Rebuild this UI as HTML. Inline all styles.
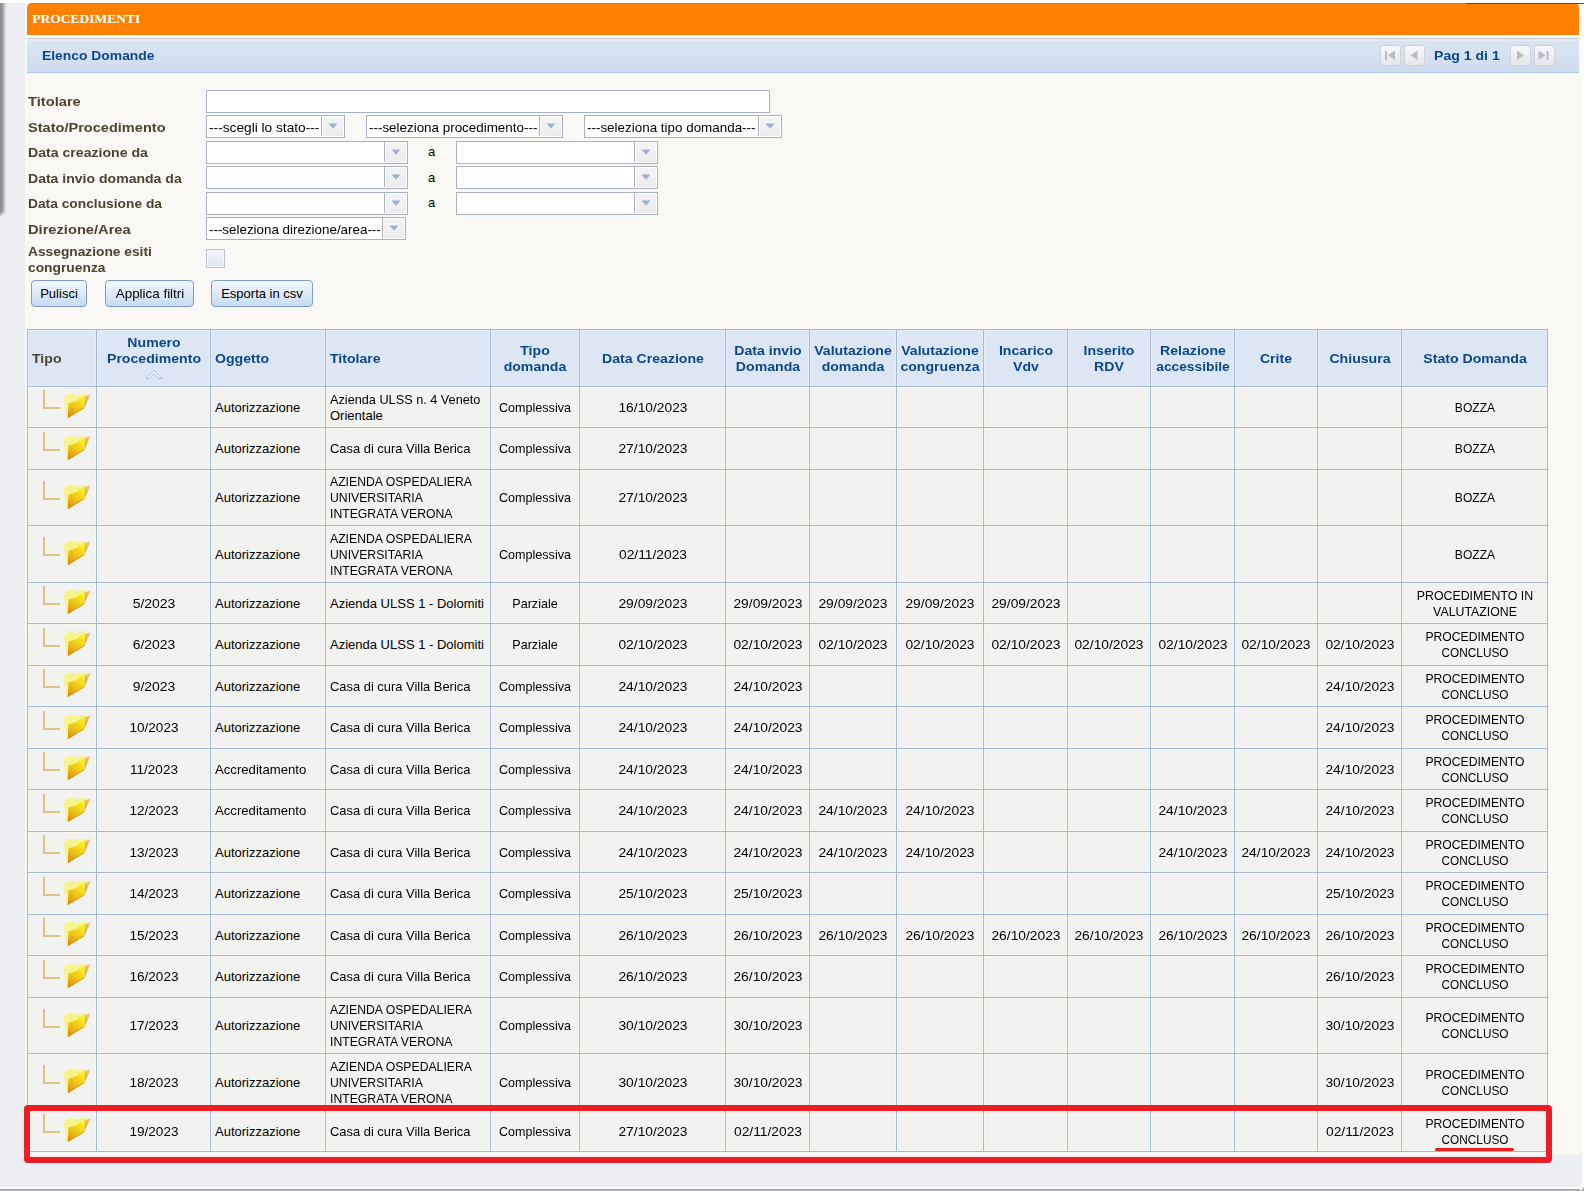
<!DOCTYPE html><html><head><meta charset="utf-8"><style>
html,body{margin:0;padding:0}
body{width:1584px;height:1191px;overflow:hidden;position:relative;background:#eceef2;font-family:"Liberation Sans",sans-serif;font-size:13px;color:#000}
div{position:absolute;box-sizing:border-box}
.t{white-space:nowrap;line-height:16px}
.c{width:600px;text-align:center;transform-origin:50% 0}
.lb{font-weight:700;color:#4b4637}
.cell{background:#f2f2f0;box-shadow:inset 0 0 0 1px #f8f7f3}
.hcell{background:#dde6f5;box-shadow:inset 0 0 0 1px #e6ecf8}
.inp{background:#fff;border:1px solid #a9b3c4}
.btn{border:1px solid #7e9cc4;border-radius:4px;background:linear-gradient(#f3f8fd,#c9def5)}
.pg{width:20px;height:20px;border:1px solid #cfd2d8;border-radius:3px;background:linear-gradient(#f7f8fa,#e6e8ec)}
</style></head><body>
<div style="left:0px;top:0px;width:1584px;height:3px;background:#fff"></div>
<div style="left:1582px;top:0px;width:2px;height:1191px;background:#fff"></div>
<div style="left:0px;top:1187px;width:1584px;height:2px;background:#fff"></div>
<div style="left:0px;top:1189px;width:1584px;height:2px;background:linear-gradient(#a4a4a4,#b8b8b8)"></div>
<div style="left:1574px;top:1179px;width:10px;height:10px;background:#fff"></div>
<div style="left:1570px;top:1175px;width:12px;height:12px;background:#eceef2;border-radius:0 0 5px 0"></div>
<div style="left:1580px;top:1187px;width:4px;height:4px;background:radial-gradient(circle at 0 0,#fff 0,#fff 45%,#a8a8a8 70%)"></div>
<div style="left:-8px;top:0px;width:12px;height:215px;background:#8c8f94;border-radius:0 0 5px 0;filter:blur(1.6px)"></div>
<div style="left:0px;top:0px;width:1584px;height:3px;background:#fff"></div>
<div style="left:25px;top:3px;width:1557px;height:1152px;background:#f9f8f4;border-radius:0 0 5px 0"></div>
<div style="left:25px;top:3px;width:2px;height:36px;background:#fdfdfb"></div>
<div style="left:27px;top:3px;width:1552px;height:32px;background:#ff8002;border-top:1px solid #e27302;border-radius:5px 5px 0 0"></div>
<div style="left:1466px;top:3px;width:118px;height:1px;background:#f00"></div>
<div style="left:27px;top:35px;width:1552px;height:3px;background:#fdfcf9"></div>
<div style="left:27px;top:38px;width:1552px;height:1px;background:#c8c8c6"></div>
<div style="left:27px;top:39px;width:1552px;height:2px;background:linear-gradient(#e9eef5,#e2eaf5)"></div>
<div style="left:27px;top:41px;width:1552px;height:31px;background:linear-gradient(#dae5f3,#cfdcee)"></div>
<div style="left:27px;top:72px;width:1552px;height:1px;background:#a9c5ea"></div>
<div class="t" style="left:32.20px;top:11.00px;font-size:13.5px;font-weight:700;color:#fff;font-family:'Liberation Serif',serif;transform-origin:0 0">PROCEDIMENTI</div>
<div class="t" style="left:42.20px;top:48.00px;font-weight:700;color:#0b4788;transform:scaleX(1.0670);transform-origin:0 0">Elenco Domande</div>
<div class="t" style="left:1433.70px;top:48.00px;font-weight:700;color:#0b4788;transform:scaleX(1.0830);transform-origin:0 0">Pag 1 di 1</div>
<div style="left:1380px;top:45px;width:21px;height:21px;border:1px solid #cfd2d8;border-radius:3px;background:linear-gradient(#f7f8fa,#e5e7eb)"></div>
<div style="left:1404px;top:45px;width:21px;height:21px;border:1px solid #cfd2d8;border-radius:3px;background:linear-gradient(#f7f8fa,#e5e7eb)"></div>
<div style="left:1510px;top:45px;width:21px;height:21px;border:1px solid #cfd2d8;border-radius:3px;background:linear-gradient(#f7f8fa,#e5e7eb)"></div>
<div style="left:1534px;top:45px;width:21px;height:21px;border:1px solid #cfd2d8;border-radius:3px;background:linear-gradient(#f7f8fa,#e5e7eb)"></div>
<svg style="position:absolute;left:1380px;top:45px" width="20" height="20"><rect x="5" y="6" width="2" height="9" fill="#b9bdc3"/><path d="M15,5.5 L15,15 L8,10.3 Z" fill="#b9bdc3"/></svg>
<svg style="position:absolute;left:1404px;top:45px" width="20" height="20"><path d="M13.5,5.5 L13.5,15 L6.5,10.3 Z" fill="#b9bdc3"/></svg>
<svg style="position:absolute;left:1510px;top:45px" width="20" height="20"><path d="M7,5.5 L7,15 L14,10.3 Z" fill="#b9bdc3"/></svg>
<svg style="position:absolute;left:1534px;top:45px" width="20" height="20"><path d="M4.5,5.5 L4.5,15 L11.5,10.3 Z" fill="#b9bdc3"/><rect x="12.5" y="6" width="2" height="9" fill="#b9bdc3"/></svg>
<div class="t" style="left:27.60px;top:94.00px;font-weight:700;color:#4a4431;transform:scaleX(1.1300);transform-origin:0 0">Titolare</div>
<div class="t" style="left:27.60px;top:120.00px;font-weight:700;color:#4a4431;transform:scaleX(1.1200);transform-origin:0 0">Stato/Procedimento</div>
<div class="t" style="left:27.60px;top:145.00px;font-weight:700;color:#4a4431;transform:scaleX(1.0850);transform-origin:0 0">Data creazione da</div>
<div class="t" style="left:27.60px;top:171.00px;font-weight:700;color:#4a4431;transform:scaleX(1.0800);transform-origin:0 0">Data invio domanda da</div>
<div class="t" style="left:27.60px;top:196.00px;font-weight:700;color:#4a4431;transform:scaleX(1.0600);transform-origin:0 0">Data conclusione da</div>
<div class="t" style="left:27.60px;top:222.00px;font-weight:700;color:#4a4431;transform:scaleX(1.1280);transform-origin:0 0">Direzione/Area</div>
<div class="t" style="left:27.60px;top:244.00px;font-weight:700;color:#4a4431;transform:scaleX(1.0580);transform-origin:0 0">Assegnazione esiti</div>
<div class="t" style="left:27.60px;top:260.00px;font-weight:700;color:#4a4431;transform:scaleX(1.0620);transform-origin:0 0">congruenza</div>
<div style="left:206px;top:90px;width:564px;height:23px;background:#fff;border:1px solid #a9b1c0"></div>
<div style="left:206px;top:115px;width:139px;height:23px;background:#fff;border:1px solid #a9b1c0"></div>
<div style="left:321px;top:115px;width:1px;height:21px;background:#a9b1c0"></div>
<div style="left:323px;top:117px;width:20px;height:19px;background:linear-gradient(#f4f4f5,#ececee)"></div>
<svg style="position:absolute;left:328.0px;top:123px" width="10" height="6"><path d="M0.5,0.5 L9.5,0.5 L5,5.8 Z" fill="#9db0d3"/></svg>
<div class="t" style="left:208.60px;top:120.00px;transform:scaleX(1.0540);transform-origin:0 0">---scegli lo stato---</div>
<div style="left:366px;top:115px;width:197px;height:23px;background:#fff;border:1px solid #a9b1c0"></div>
<div style="left:539px;top:115px;width:1px;height:21px;background:#a9b1c0"></div>
<div style="left:541px;top:117px;width:20px;height:19px;background:linear-gradient(#f4f4f5,#ececee)"></div>
<svg style="position:absolute;left:546.0px;top:123px" width="10" height="6"><path d="M0.5,0.5 L9.5,0.5 L5,5.8 Z" fill="#9db0d3"/></svg>
<div class="t" style="left:368.60px;top:120.00px;transform:scaleX(1.0310);transform-origin:0 0">---seleziona procedimento---</div>
<div style="left:584px;top:115px;width:198px;height:23px;background:#fff;border:1px solid #a9b1c0"></div>
<div style="left:758px;top:115px;width:1px;height:21px;background:#a9b1c0"></div>
<div style="left:760px;top:117px;width:20px;height:19px;background:linear-gradient(#f4f4f5,#ececee)"></div>
<svg style="position:absolute;left:765.0px;top:123px" width="10" height="6"><path d="M0.5,0.5 L9.5,0.5 L5,5.8 Z" fill="#9db0d3"/></svg>
<div class="t" style="left:586.60px;top:120.00px;transform:scaleX(1.0320);transform-origin:0 0">---seleziona tipo domanda---</div>
<div style="left:206px;top:141px;width:202px;height:23px;background:#fff;border:1px solid #a9b1c0"></div>
<div style="left:384px;top:141px;width:1px;height:21px;background:#a9b1c0"></div>
<div style="left:386px;top:143px;width:20px;height:19px;background:linear-gradient(#f4f4f5,#ececee)"></div>
<svg style="position:absolute;left:391.0px;top:149px" width="10" height="6"><path d="M0.5,0.5 L9.5,0.5 L5,5.8 Z" fill="#9db0d3"/></svg>
<div style="left:456px;top:141px;width:202px;height:23px;background:#fff;border:1px solid #a9b1c0"></div>
<div style="left:634px;top:141px;width:1px;height:21px;background:#a9b1c0"></div>
<div style="left:636px;top:143px;width:20px;height:19px;background:linear-gradient(#f4f4f5,#ececee)"></div>
<svg style="position:absolute;left:641.0px;top:149px" width="10" height="6"><path d="M0.5,0.5 L9.5,0.5 L5,5.8 Z" fill="#9db0d3"/></svg>
<div style="left:206px;top:166px;width:202px;height:23px;background:#fff;border:1px solid #a9b1c0"></div>
<div style="left:384px;top:166px;width:1px;height:21px;background:#a9b1c0"></div>
<div style="left:386px;top:168px;width:20px;height:19px;background:linear-gradient(#f4f4f5,#ececee)"></div>
<svg style="position:absolute;left:391.0px;top:174px" width="10" height="6"><path d="M0.5,0.5 L9.5,0.5 L5,5.8 Z" fill="#9db0d3"/></svg>
<div style="left:456px;top:166px;width:202px;height:23px;background:#fff;border:1px solid #a9b1c0"></div>
<div style="left:634px;top:166px;width:1px;height:21px;background:#a9b1c0"></div>
<div style="left:636px;top:168px;width:20px;height:19px;background:linear-gradient(#f4f4f5,#ececee)"></div>
<svg style="position:absolute;left:641.0px;top:174px" width="10" height="6"><path d="M0.5,0.5 L9.5,0.5 L5,5.8 Z" fill="#9db0d3"/></svg>
<div style="left:206px;top:192px;width:202px;height:23px;background:#fff;border:1px solid #a9b1c0"></div>
<div style="left:384px;top:192px;width:1px;height:21px;background:#a9b1c0"></div>
<div style="left:386px;top:194px;width:20px;height:19px;background:linear-gradient(#f4f4f5,#ececee)"></div>
<svg style="position:absolute;left:391.0px;top:200px" width="10" height="6"><path d="M0.5,0.5 L9.5,0.5 L5,5.8 Z" fill="#9db0d3"/></svg>
<div style="left:456px;top:192px;width:202px;height:23px;background:#fff;border:1px solid #a9b1c0"></div>
<div style="left:634px;top:192px;width:1px;height:21px;background:#a9b1c0"></div>
<div style="left:636px;top:194px;width:20px;height:19px;background:linear-gradient(#f4f4f5,#ececee)"></div>
<svg style="position:absolute;left:641.0px;top:200px" width="10" height="6"><path d="M0.5,0.5 L9.5,0.5 L5,5.8 Z" fill="#9db0d3"/></svg>
<div class="t c" style="left:131.70px;top:144.00px;">a</div>
<div class="t c" style="left:131.70px;top:170.00px;">a</div>
<div class="t c" style="left:131.70px;top:195.00px;">a</div>
<div style="left:206px;top:217px;width:200px;height:23px;background:#fff;border:1px solid #a9b1c0"></div>
<div style="left:382px;top:217px;width:1px;height:21px;background:#a9b1c0"></div>
<div style="left:384px;top:219px;width:20px;height:19px;background:linear-gradient(#f4f4f5,#ececee)"></div>
<svg style="position:absolute;left:389.0px;top:225px" width="10" height="6"><path d="M0.5,0.5 L9.5,0.5 L5,5.8 Z" fill="#9db0d3"/></svg>
<div class="t" style="left:208.60px;top:222.00px;transform:scaleX(1.0290);transform-origin:0 0">---seleziona direzione/area---</div>
<div style="left:206px;top:249px;width:19px;height:19px;border:1px solid #b9c3d1;box-shadow:inset 0 0 0 1px #f4f6f9;background:linear-gradient(#f3f5f8,#dfe6ee)"></div>
<div style="left:31px;top:280px;width:56px;height:27px;border:1px solid #7e9cc4;border-radius:4px;background:linear-gradient(#f3f8fd,#c6dbf3)"></div>
<div class="t c" style="left:-241.00px;top:286.00px;">Pulisci</div>
<div style="left:105px;top:280px;width:89px;height:27px;border:1px solid #7e9cc4;border-radius:4px;background:linear-gradient(#f3f8fd,#c6dbf3)"></div>
<div class="t c" style="left:-150.50px;top:286.00px;transform:scaleX(1.0300);">Applica filtri</div>
<div style="left:211px;top:280px;width:102px;height:27px;border:1px solid #7e9cc4;border-radius:4px;background:linear-gradient(#f3f8fd,#c6dbf3)"></div>
<div class="t c" style="left:-38.00px;top:286.00px;">Esporta in csv</div>
<div style="left:27px;top:329px;width:1521px;height:823px;background:#a3b8d2"></div>
<div style="left:28px;top:330px;width:68px;height:56px;background:#dde6f5;box-shadow:inset 0 0 0 1px #e6ecf8"></div>
<div class="t" style="left:31.60px;top:351.00px;font-weight:700;color:#4a4431;transform:scaleX(1.0850);transform-origin:0 0">Tipo</div>
<div style="left:97px;top:330px;width:113px;height:56px;background:#dde6f5;box-shadow:inset 0 0 0 1px #e6ecf8"></div>
<div class="t c" style="left:-146.50px;top:335.00px;font-weight:700;color:#0b4788;transform:scaleX(1.0850);">Numero</div>
<div class="t c" style="left:-146.50px;top:351.00px;font-weight:700;color:#0b4788;transform:scaleX(1.0850);">Procedimento</div>
<svg style="position:absolute;left:144.5px;top:369.0px" width="18" height="11"><path d="M1,9.5 L9,1.5 L17,9.5 L13.8,9.5 L9,4.8 L4.2,9.5 Z" fill="#f4f7fb" stroke="#a3bbd6" stroke-width="1"/></svg>
<div style="left:211px;top:330px;width:114px;height:56px;background:#dde6f5;box-shadow:inset 0 0 0 1px #e6ecf8"></div>
<div class="t" style="left:214.60px;top:351.00px;font-weight:700;color:#0b4788;transform:scaleX(1.0850);transform-origin:0 0">Oggetto</div>
<div style="left:326px;top:330px;width:164px;height:56px;background:#dde6f5;box-shadow:inset 0 0 0 1px #e6ecf8"></div>
<div class="t" style="left:329.60px;top:351.00px;font-weight:700;color:#0b4788;transform:scaleX(1.0850);transform-origin:0 0">Titolare</div>
<div style="left:491px;top:330px;width:88px;height:56px;background:#dde6f5;box-shadow:inset 0 0 0 1px #e6ecf8"></div>
<div class="t c" style="left:235.00px;top:343.00px;font-weight:700;color:#0b4788;transform:scaleX(1.0850);">Tipo</div>
<div class="t c" style="left:235.00px;top:359.00px;font-weight:700;color:#0b4788;transform:scaleX(1.0850);">domanda</div>
<div style="left:580px;top:330px;width:145px;height:56px;background:#dde6f5;box-shadow:inset 0 0 0 1px #e6ecf8"></div>
<div class="t c" style="left:352.50px;top:351.00px;font-weight:700;color:#0b4788;transform:scaleX(1.0850);">Data Creazione</div>
<div style="left:726px;top:330px;width:83px;height:56px;background:#dde6f5;box-shadow:inset 0 0 0 1px #e6ecf8"></div>
<div class="t c" style="left:467.50px;top:343.00px;font-weight:700;color:#0b4788;transform:scaleX(1.0850);">Data invio</div>
<div class="t c" style="left:467.50px;top:359.00px;font-weight:700;color:#0b4788;transform:scaleX(1.0850);">Domanda</div>
<div style="left:810px;top:330px;width:86px;height:56px;background:#dde6f5;box-shadow:inset 0 0 0 1px #e6ecf8"></div>
<div class="t c" style="left:553.00px;top:343.00px;font-weight:700;color:#0b4788;transform:scaleX(1.0850);">Valutazione</div>
<div class="t c" style="left:553.00px;top:359.00px;font-weight:700;color:#0b4788;transform:scaleX(1.0850);">domanda</div>
<div style="left:897px;top:330px;width:86px;height:56px;background:#dde6f5;box-shadow:inset 0 0 0 1px #e6ecf8"></div>
<div class="t c" style="left:640.00px;top:343.00px;font-weight:700;color:#0b4788;transform:scaleX(1.0850);">Valutazione</div>
<div class="t c" style="left:640.00px;top:359.00px;font-weight:700;color:#0b4788;transform:scaleX(1.0850);">congruenza</div>
<div style="left:984px;top:330px;width:83px;height:56px;background:#dde6f5;box-shadow:inset 0 0 0 1px #e6ecf8"></div>
<div class="t c" style="left:725.50px;top:343.00px;font-weight:700;color:#0b4788;transform:scaleX(1.0850);">Incarico</div>
<div class="t c" style="left:725.50px;top:359.00px;font-weight:700;color:#0b4788;transform:scaleX(1.0850);">Vdv</div>
<div style="left:1068px;top:330px;width:82px;height:56px;background:#dde6f5;box-shadow:inset 0 0 0 1px #e6ecf8"></div>
<div class="t c" style="left:809.00px;top:343.00px;font-weight:700;color:#0b4788;transform:scaleX(1.0850);">Inserito</div>
<div class="t c" style="left:809.00px;top:359.00px;font-weight:700;color:#0b4788;transform:scaleX(1.0850);">RDV</div>
<div style="left:1151px;top:330px;width:83px;height:56px;background:#dde6f5;box-shadow:inset 0 0 0 1px #e6ecf8"></div>
<div class="t c" style="left:892.50px;top:343.00px;font-weight:700;color:#0b4788;transform:scaleX(1.0850);">Relazione</div>
<div class="t c" style="left:892.50px;top:359.00px;font-weight:700;color:#0b4788;transform:scaleX(1.0600);">accessibile</div>
<div style="left:1235px;top:330px;width:82px;height:56px;background:#dde6f5;box-shadow:inset 0 0 0 1px #e6ecf8"></div>
<div class="t c" style="left:976.00px;top:351.00px;font-weight:700;color:#0b4788;transform:scaleX(1.0850);">Crite</div>
<div style="left:1318px;top:330px;width:83px;height:56px;background:#dde6f5;box-shadow:inset 0 0 0 1px #e6ecf8"></div>
<div class="t c" style="left:1059.50px;top:351.00px;font-weight:700;color:#0b4788;transform:scaleX(1.0850);">Chiusura</div>
<div style="left:1402px;top:330px;width:145px;height:56px;background:#dde6f5;box-shadow:inset 0 0 0 1px #e6ecf8"></div>
<div class="t c" style="left:1174.50px;top:351.00px;font-weight:700;color:#0b4788;transform:scaleX(1.0850);">Stato Domanda</div>
<div style="left:28px;top:387px;width:68px;height:40px;background:#f2f2f0;box-shadow:inset 0 0 0 1px #f8f7f3"></div>
<div style="left:97px;top:387px;width:113px;height:40px;background:#f2f2f0;box-shadow:inset 0 0 0 1px #f8f7f3"></div>
<div style="left:211px;top:387px;width:114px;height:40px;background:#f2f2f0;box-shadow:inset 0 0 0 1px #f8f7f3"></div>
<div style="left:326px;top:387px;width:164px;height:40px;background:#f2f2f0;box-shadow:inset 0 0 0 1px #f8f7f3"></div>
<div style="left:491px;top:387px;width:88px;height:40px;background:#f2f2f0;box-shadow:inset 0 0 0 1px #f8f7f3"></div>
<div style="left:580px;top:387px;width:145px;height:40px;background:#f2f2f0;box-shadow:inset 0 0 0 1px #f8f7f3"></div>
<div style="left:726px;top:387px;width:83px;height:40px;background:#f2f2f0;box-shadow:inset 0 0 0 1px #f8f7f3"></div>
<div style="left:810px;top:387px;width:86px;height:40px;background:#f2f2f0;box-shadow:inset 0 0 0 1px #f8f7f3"></div>
<div style="left:897px;top:387px;width:86px;height:40px;background:#f2f2f0;box-shadow:inset 0 0 0 1px #f8f7f3"></div>
<div style="left:984px;top:387px;width:83px;height:40px;background:#f2f2f0;box-shadow:inset 0 0 0 1px #f8f7f3"></div>
<div style="left:1068px;top:387px;width:82px;height:40px;background:#f2f2f0;box-shadow:inset 0 0 0 1px #f8f7f3"></div>
<div style="left:1151px;top:387px;width:83px;height:40px;background:#f2f2f0;box-shadow:inset 0 0 0 1px #f8f7f3"></div>
<div style="left:1235px;top:387px;width:82px;height:40px;background:#f2f2f0;box-shadow:inset 0 0 0 1px #f8f7f3"></div>
<div style="left:1318px;top:387px;width:83px;height:40px;background:#f2f2f0;box-shadow:inset 0 0 0 1px #f8f7f3"></div>
<div style="left:1402px;top:387px;width:145px;height:40px;background:#f2f2f0;box-shadow:inset 0 0 0 1px #f8f7f3"></div>
<div style="left:43px;top:390.0px;width:2px;height:19px;background:#dcc188"></div>
<div style="left:43px;top:407.0px;width:17px;height:2px;background:#dcc188"></div>
<svg style="position:absolute;left:63px;top:393.0px" width="28" height="26" viewBox="0 0 28 26">
<defs><linearGradient id="fg1" x1="0.75" y1="0" x2="0.25" y2="1"><stop offset="0" stop-color="#faf41e"/><stop offset="0.5" stop-color="#efc818"/><stop offset="1" stop-color="#d98f0f"/></linearGradient>
<linearGradient id="ff1" x1="0" y1="0" x2="0" y2="1"><stop offset="0" stop-color="#efc86a"/><stop offset="1" stop-color="#d49c48"/></linearGradient></defs>
<path d="M0.6,7 C0.9,4.4 2.4,1.8 4.3,1.4 L9.2,0.5 L11.7,2.2 L21.3,0.4 L22.5,2.2 L21.6,14.6 L4.8,24.9 L4.0,24.7 Z" fill="#f7f48e"/>
<path d="M21.5,3 L27.4,1.6 L21.4,14.8 Z" fill="url(#ff1)"/>
<path d="M5.4,10.5 L14.2,7.8 L15.8,5.4 L21.6,3.3 L21.4,14.8 L4.8,25 Z" fill="url(#fg1)"/>
<path d="M4.8,24.9 L21.4,14.7" stroke="#c8901c" stroke-width="0.8" fill="none"/>
</svg>
<div class="t" style="left:215.00px;top:400.00px;transform-origin:0 0">Autorizzazione</div>
<div class="t" style="left:330.00px;top:392.00px;transform:scaleX(0.9770);transform-origin:0 0">Azienda ULSS n. 4 Veneto</div>
<div class="t" style="left:330.00px;top:408.00px;transform-origin:0 0">Orientale</div>
<div class="t c" style="left:235.00px;top:400.00px;transform:scaleX(0.9660);">Complessiva</div>
<div class="t c" style="left:352.50px;top:400.00px;transform:scaleX(1.0620);">16/10/2023</div>
<div class="t c" style="left:1174.50px;top:400.00px;transform:scaleX(0.9300);">BOZZA</div>
<div style="left:28px;top:428px;width:68px;height:41px;background:#f2f2f0;box-shadow:inset 0 0 0 1px #f8f7f3"></div>
<div style="left:97px;top:428px;width:113px;height:41px;background:#f2f2f0;box-shadow:inset 0 0 0 1px #f8f7f3"></div>
<div style="left:211px;top:428px;width:114px;height:41px;background:#f2f2f0;box-shadow:inset 0 0 0 1px #f8f7f3"></div>
<div style="left:326px;top:428px;width:164px;height:41px;background:#f2f2f0;box-shadow:inset 0 0 0 1px #f8f7f3"></div>
<div style="left:491px;top:428px;width:88px;height:41px;background:#f2f2f0;box-shadow:inset 0 0 0 1px #f8f7f3"></div>
<div style="left:580px;top:428px;width:145px;height:41px;background:#f2f2f0;box-shadow:inset 0 0 0 1px #f8f7f3"></div>
<div style="left:726px;top:428px;width:83px;height:41px;background:#f2f2f0;box-shadow:inset 0 0 0 1px #f8f7f3"></div>
<div style="left:810px;top:428px;width:86px;height:41px;background:#f2f2f0;box-shadow:inset 0 0 0 1px #f8f7f3"></div>
<div style="left:897px;top:428px;width:86px;height:41px;background:#f2f2f0;box-shadow:inset 0 0 0 1px #f8f7f3"></div>
<div style="left:984px;top:428px;width:83px;height:41px;background:#f2f2f0;box-shadow:inset 0 0 0 1px #f8f7f3"></div>
<div style="left:1068px;top:428px;width:82px;height:41px;background:#f2f2f0;box-shadow:inset 0 0 0 1px #f8f7f3"></div>
<div style="left:1151px;top:428px;width:83px;height:41px;background:#f2f2f0;box-shadow:inset 0 0 0 1px #f8f7f3"></div>
<div style="left:1235px;top:428px;width:82px;height:41px;background:#f2f2f0;box-shadow:inset 0 0 0 1px #f8f7f3"></div>
<div style="left:1318px;top:428px;width:83px;height:41px;background:#f2f2f0;box-shadow:inset 0 0 0 1px #f8f7f3"></div>
<div style="left:1402px;top:428px;width:145px;height:41px;background:#f2f2f0;box-shadow:inset 0 0 0 1px #f8f7f3"></div>
<div style="left:43px;top:431.5px;width:2px;height:19px;background:#dcc188"></div>
<div style="left:43px;top:448.5px;width:17px;height:2px;background:#dcc188"></div>
<svg style="position:absolute;left:63px;top:434.5px" width="28" height="26" viewBox="0 0 28 26">
<defs><linearGradient id="fg2" x1="0.75" y1="0" x2="0.25" y2="1"><stop offset="0" stop-color="#faf41e"/><stop offset="0.5" stop-color="#efc818"/><stop offset="1" stop-color="#d98f0f"/></linearGradient>
<linearGradient id="ff2" x1="0" y1="0" x2="0" y2="1"><stop offset="0" stop-color="#efc86a"/><stop offset="1" stop-color="#d49c48"/></linearGradient></defs>
<path d="M0.6,7 C0.9,4.4 2.4,1.8 4.3,1.4 L9.2,0.5 L11.7,2.2 L21.3,0.4 L22.5,2.2 L21.6,14.6 L4.8,24.9 L4.0,24.7 Z" fill="#f7f48e"/>
<path d="M21.5,3 L27.4,1.6 L21.4,14.8 Z" fill="url(#ff2)"/>
<path d="M5.4,10.5 L14.2,7.8 L15.8,5.4 L21.6,3.3 L21.4,14.8 L4.8,25 Z" fill="url(#fg2)"/>
<path d="M4.8,24.9 L21.4,14.7" stroke="#c8901c" stroke-width="0.8" fill="none"/>
</svg>
<div class="t" style="left:215.00px;top:441.00px;transform-origin:0 0">Autorizzazione</div>
<div class="t" style="left:330.00px;top:441.00px;transform:scaleX(0.9930);transform-origin:0 0">Casa di cura Villa Berica</div>
<div class="t c" style="left:235.00px;top:441.00px;transform:scaleX(0.9660);">Complessiva</div>
<div class="t c" style="left:352.50px;top:441.00px;transform:scaleX(1.0620);">27/10/2023</div>
<div class="t c" style="left:1174.50px;top:441.00px;transform:scaleX(0.9300);">BOZZA</div>
<div style="left:28px;top:470px;width:68px;height:55px;background:#f2f2f0;box-shadow:inset 0 0 0 1px #f8f7f3"></div>
<div style="left:97px;top:470px;width:113px;height:55px;background:#f2f2f0;box-shadow:inset 0 0 0 1px #f8f7f3"></div>
<div style="left:211px;top:470px;width:114px;height:55px;background:#f2f2f0;box-shadow:inset 0 0 0 1px #f8f7f3"></div>
<div style="left:326px;top:470px;width:164px;height:55px;background:#f2f2f0;box-shadow:inset 0 0 0 1px #f8f7f3"></div>
<div style="left:491px;top:470px;width:88px;height:55px;background:#f2f2f0;box-shadow:inset 0 0 0 1px #f8f7f3"></div>
<div style="left:580px;top:470px;width:145px;height:55px;background:#f2f2f0;box-shadow:inset 0 0 0 1px #f8f7f3"></div>
<div style="left:726px;top:470px;width:83px;height:55px;background:#f2f2f0;box-shadow:inset 0 0 0 1px #f8f7f3"></div>
<div style="left:810px;top:470px;width:86px;height:55px;background:#f2f2f0;box-shadow:inset 0 0 0 1px #f8f7f3"></div>
<div style="left:897px;top:470px;width:86px;height:55px;background:#f2f2f0;box-shadow:inset 0 0 0 1px #f8f7f3"></div>
<div style="left:984px;top:470px;width:83px;height:55px;background:#f2f2f0;box-shadow:inset 0 0 0 1px #f8f7f3"></div>
<div style="left:1068px;top:470px;width:82px;height:55px;background:#f2f2f0;box-shadow:inset 0 0 0 1px #f8f7f3"></div>
<div style="left:1151px;top:470px;width:83px;height:55px;background:#f2f2f0;box-shadow:inset 0 0 0 1px #f8f7f3"></div>
<div style="left:1235px;top:470px;width:82px;height:55px;background:#f2f2f0;box-shadow:inset 0 0 0 1px #f8f7f3"></div>
<div style="left:1318px;top:470px;width:83px;height:55px;background:#f2f2f0;box-shadow:inset 0 0 0 1px #f8f7f3"></div>
<div style="left:1402px;top:470px;width:145px;height:55px;background:#f2f2f0;box-shadow:inset 0 0 0 1px #f8f7f3"></div>
<div style="left:43px;top:480.5px;width:2px;height:19px;background:#dcc188"></div>
<div style="left:43px;top:497.5px;width:17px;height:2px;background:#dcc188"></div>
<svg style="position:absolute;left:63px;top:483.5px" width="28" height="26" viewBox="0 0 28 26">
<defs><linearGradient id="fg3" x1="0.75" y1="0" x2="0.25" y2="1"><stop offset="0" stop-color="#faf41e"/><stop offset="0.5" stop-color="#efc818"/><stop offset="1" stop-color="#d98f0f"/></linearGradient>
<linearGradient id="ff3" x1="0" y1="0" x2="0" y2="1"><stop offset="0" stop-color="#efc86a"/><stop offset="1" stop-color="#d49c48"/></linearGradient></defs>
<path d="M0.6,7 C0.9,4.4 2.4,1.8 4.3,1.4 L9.2,0.5 L11.7,2.2 L21.3,0.4 L22.5,2.2 L21.6,14.6 L4.8,24.9 L4.0,24.7 Z" fill="#f7f48e"/>
<path d="M21.5,3 L27.4,1.6 L21.4,14.8 Z" fill="url(#ff3)"/>
<path d="M5.4,10.5 L14.2,7.8 L15.8,5.4 L21.6,3.3 L21.4,14.8 L4.8,25 Z" fill="url(#fg3)"/>
<path d="M4.8,24.9 L21.4,14.7" stroke="#c8901c" stroke-width="0.8" fill="none"/>
</svg>
<div class="t" style="left:215.00px;top:490.00px;transform-origin:0 0">Autorizzazione</div>
<div class="t" style="left:330.00px;top:474.00px;transform:scaleX(0.9400);transform-origin:0 0">AZIENDA OSPEDALIERA</div>
<div class="t" style="left:330.00px;top:490.00px;transform:scaleX(0.9400);transform-origin:0 0">UNIVERSITARIA</div>
<div class="t" style="left:330.00px;top:506.00px;transform:scaleX(0.9400);transform-origin:0 0">INTEGRATA VERONA</div>
<div class="t c" style="left:235.00px;top:490.00px;transform:scaleX(0.9660);">Complessiva</div>
<div class="t c" style="left:352.50px;top:490.00px;transform:scaleX(1.0620);">27/10/2023</div>
<div class="t c" style="left:1174.50px;top:490.00px;transform:scaleX(0.9300);">BOZZA</div>
<div style="left:28px;top:526px;width:68px;height:56px;background:#f2f2f0;box-shadow:inset 0 0 0 1px #f8f7f3"></div>
<div style="left:97px;top:526px;width:113px;height:56px;background:#f2f2f0;box-shadow:inset 0 0 0 1px #f8f7f3"></div>
<div style="left:211px;top:526px;width:114px;height:56px;background:#f2f2f0;box-shadow:inset 0 0 0 1px #f8f7f3"></div>
<div style="left:326px;top:526px;width:164px;height:56px;background:#f2f2f0;box-shadow:inset 0 0 0 1px #f8f7f3"></div>
<div style="left:491px;top:526px;width:88px;height:56px;background:#f2f2f0;box-shadow:inset 0 0 0 1px #f8f7f3"></div>
<div style="left:580px;top:526px;width:145px;height:56px;background:#f2f2f0;box-shadow:inset 0 0 0 1px #f8f7f3"></div>
<div style="left:726px;top:526px;width:83px;height:56px;background:#f2f2f0;box-shadow:inset 0 0 0 1px #f8f7f3"></div>
<div style="left:810px;top:526px;width:86px;height:56px;background:#f2f2f0;box-shadow:inset 0 0 0 1px #f8f7f3"></div>
<div style="left:897px;top:526px;width:86px;height:56px;background:#f2f2f0;box-shadow:inset 0 0 0 1px #f8f7f3"></div>
<div style="left:984px;top:526px;width:83px;height:56px;background:#f2f2f0;box-shadow:inset 0 0 0 1px #f8f7f3"></div>
<div style="left:1068px;top:526px;width:82px;height:56px;background:#f2f2f0;box-shadow:inset 0 0 0 1px #f8f7f3"></div>
<div style="left:1151px;top:526px;width:83px;height:56px;background:#f2f2f0;box-shadow:inset 0 0 0 1px #f8f7f3"></div>
<div style="left:1235px;top:526px;width:82px;height:56px;background:#f2f2f0;box-shadow:inset 0 0 0 1px #f8f7f3"></div>
<div style="left:1318px;top:526px;width:83px;height:56px;background:#f2f2f0;box-shadow:inset 0 0 0 1px #f8f7f3"></div>
<div style="left:1402px;top:526px;width:145px;height:56px;background:#f2f2f0;box-shadow:inset 0 0 0 1px #f8f7f3"></div>
<div style="left:43px;top:537.0px;width:2px;height:19px;background:#dcc188"></div>
<div style="left:43px;top:554.0px;width:17px;height:2px;background:#dcc188"></div>
<svg style="position:absolute;left:63px;top:540.0px" width="28" height="26" viewBox="0 0 28 26">
<defs><linearGradient id="fg4" x1="0.75" y1="0" x2="0.25" y2="1"><stop offset="0" stop-color="#faf41e"/><stop offset="0.5" stop-color="#efc818"/><stop offset="1" stop-color="#d98f0f"/></linearGradient>
<linearGradient id="ff4" x1="0" y1="0" x2="0" y2="1"><stop offset="0" stop-color="#efc86a"/><stop offset="1" stop-color="#d49c48"/></linearGradient></defs>
<path d="M0.6,7 C0.9,4.4 2.4,1.8 4.3,1.4 L9.2,0.5 L11.7,2.2 L21.3,0.4 L22.5,2.2 L21.6,14.6 L4.8,24.9 L4.0,24.7 Z" fill="#f7f48e"/>
<path d="M21.5,3 L27.4,1.6 L21.4,14.8 Z" fill="url(#ff4)"/>
<path d="M5.4,10.5 L14.2,7.8 L15.8,5.4 L21.6,3.3 L21.4,14.8 L4.8,25 Z" fill="url(#fg4)"/>
<path d="M4.8,24.9 L21.4,14.7" stroke="#c8901c" stroke-width="0.8" fill="none"/>
</svg>
<div class="t" style="left:215.00px;top:547.00px;transform-origin:0 0">Autorizzazione</div>
<div class="t" style="left:330.00px;top:531.00px;transform:scaleX(0.9400);transform-origin:0 0">AZIENDA OSPEDALIERA</div>
<div class="t" style="left:330.00px;top:547.00px;transform:scaleX(0.9400);transform-origin:0 0">UNIVERSITARIA</div>
<div class="t" style="left:330.00px;top:563.00px;transform:scaleX(0.9400);transform-origin:0 0">INTEGRATA VERONA</div>
<div class="t c" style="left:235.00px;top:547.00px;transform:scaleX(0.9660);">Complessiva</div>
<div class="t c" style="left:352.50px;top:547.00px;transform:scaleX(1.0620);">02/11/2023</div>
<div class="t c" style="left:1174.50px;top:547.00px;transform:scaleX(0.9300);">BOZZA</div>
<div style="left:28px;top:583px;width:68px;height:40px;background:#f2f2f0;box-shadow:inset 0 0 0 1px #f8f7f3"></div>
<div style="left:97px;top:583px;width:113px;height:40px;background:#f2f2f0;box-shadow:inset 0 0 0 1px #f8f7f3"></div>
<div style="left:211px;top:583px;width:114px;height:40px;background:#f2f2f0;box-shadow:inset 0 0 0 1px #f8f7f3"></div>
<div style="left:326px;top:583px;width:164px;height:40px;background:#f2f2f0;box-shadow:inset 0 0 0 1px #f8f7f3"></div>
<div style="left:491px;top:583px;width:88px;height:40px;background:#f2f2f0;box-shadow:inset 0 0 0 1px #f8f7f3"></div>
<div style="left:580px;top:583px;width:145px;height:40px;background:#f2f2f0;box-shadow:inset 0 0 0 1px #f8f7f3"></div>
<div style="left:726px;top:583px;width:83px;height:40px;background:#f2f2f0;box-shadow:inset 0 0 0 1px #f8f7f3"></div>
<div style="left:810px;top:583px;width:86px;height:40px;background:#f2f2f0;box-shadow:inset 0 0 0 1px #f8f7f3"></div>
<div style="left:897px;top:583px;width:86px;height:40px;background:#f2f2f0;box-shadow:inset 0 0 0 1px #f8f7f3"></div>
<div style="left:984px;top:583px;width:83px;height:40px;background:#f2f2f0;box-shadow:inset 0 0 0 1px #f8f7f3"></div>
<div style="left:1068px;top:583px;width:82px;height:40px;background:#f2f2f0;box-shadow:inset 0 0 0 1px #f8f7f3"></div>
<div style="left:1151px;top:583px;width:83px;height:40px;background:#f2f2f0;box-shadow:inset 0 0 0 1px #f8f7f3"></div>
<div style="left:1235px;top:583px;width:82px;height:40px;background:#f2f2f0;box-shadow:inset 0 0 0 1px #f8f7f3"></div>
<div style="left:1318px;top:583px;width:83px;height:40px;background:#f2f2f0;box-shadow:inset 0 0 0 1px #f8f7f3"></div>
<div style="left:1402px;top:583px;width:145px;height:40px;background:#f2f2f0;box-shadow:inset 0 0 0 1px #f8f7f3"></div>
<div style="left:43px;top:586.0px;width:2px;height:19px;background:#dcc188"></div>
<div style="left:43px;top:603.0px;width:17px;height:2px;background:#dcc188"></div>
<svg style="position:absolute;left:63px;top:589.0px" width="28" height="26" viewBox="0 0 28 26">
<defs><linearGradient id="fg5" x1="0.75" y1="0" x2="0.25" y2="1"><stop offset="0" stop-color="#faf41e"/><stop offset="0.5" stop-color="#efc818"/><stop offset="1" stop-color="#d98f0f"/></linearGradient>
<linearGradient id="ff5" x1="0" y1="0" x2="0" y2="1"><stop offset="0" stop-color="#efc86a"/><stop offset="1" stop-color="#d49c48"/></linearGradient></defs>
<path d="M0.6,7 C0.9,4.4 2.4,1.8 4.3,1.4 L9.2,0.5 L11.7,2.2 L21.3,0.4 L22.5,2.2 L21.6,14.6 L4.8,24.9 L4.0,24.7 Z" fill="#f7f48e"/>
<path d="M21.5,3 L27.4,1.6 L21.4,14.8 Z" fill="url(#ff5)"/>
<path d="M5.4,10.5 L14.2,7.8 L15.8,5.4 L21.6,3.3 L21.4,14.8 L4.8,25 Z" fill="url(#fg5)"/>
<path d="M4.8,24.9 L21.4,14.7" stroke="#c8901c" stroke-width="0.8" fill="none"/>
</svg>
<div class="t c" style="left:-146.50px;top:596.00px;transform:scaleX(1.0740);">5/2023</div>
<div class="t" style="left:215.00px;top:596.00px;transform-origin:0 0">Autorizzazione</div>
<div class="t" style="left:330.00px;top:596.00px;transform-origin:0 0">Azienda ULSS 1 - Dolomiti</div>
<div class="t c" style="left:235.00px;top:596.00px;transform:scaleX(0.9660);">Parziale</div>
<div class="t c" style="left:352.50px;top:596.00px;transform:scaleX(1.0620);">29/09/2023</div>
<div class="t c" style="left:467.50px;top:596.00px;transform:scaleX(1.0620);">29/09/2023</div>
<div class="t c" style="left:553.00px;top:596.00px;transform:scaleX(1.0620);">29/09/2023</div>
<div class="t c" style="left:640.00px;top:596.00px;transform:scaleX(1.0620);">29/09/2023</div>
<div class="t c" style="left:725.50px;top:596.00px;transform:scaleX(1.0620);">29/09/2023</div>
<div class="t c" style="left:1174.50px;top:588.00px;transform:scaleX(0.9500);">PROCEDIMENTO IN</div>
<div class="t c" style="left:1174.50px;top:604.00px;transform:scaleX(0.9480);">VALUTAZIONE</div>
<div style="left:28px;top:624px;width:68px;height:41px;background:#f2f2f0;box-shadow:inset 0 0 0 1px #f8f7f3"></div>
<div style="left:97px;top:624px;width:113px;height:41px;background:#f2f2f0;box-shadow:inset 0 0 0 1px #f8f7f3"></div>
<div style="left:211px;top:624px;width:114px;height:41px;background:#f2f2f0;box-shadow:inset 0 0 0 1px #f8f7f3"></div>
<div style="left:326px;top:624px;width:164px;height:41px;background:#f2f2f0;box-shadow:inset 0 0 0 1px #f8f7f3"></div>
<div style="left:491px;top:624px;width:88px;height:41px;background:#f2f2f0;box-shadow:inset 0 0 0 1px #f8f7f3"></div>
<div style="left:580px;top:624px;width:145px;height:41px;background:#f2f2f0;box-shadow:inset 0 0 0 1px #f8f7f3"></div>
<div style="left:726px;top:624px;width:83px;height:41px;background:#f2f2f0;box-shadow:inset 0 0 0 1px #f8f7f3"></div>
<div style="left:810px;top:624px;width:86px;height:41px;background:#f2f2f0;box-shadow:inset 0 0 0 1px #f8f7f3"></div>
<div style="left:897px;top:624px;width:86px;height:41px;background:#f2f2f0;box-shadow:inset 0 0 0 1px #f8f7f3"></div>
<div style="left:984px;top:624px;width:83px;height:41px;background:#f2f2f0;box-shadow:inset 0 0 0 1px #f8f7f3"></div>
<div style="left:1068px;top:624px;width:82px;height:41px;background:#f2f2f0;box-shadow:inset 0 0 0 1px #f8f7f3"></div>
<div style="left:1151px;top:624px;width:83px;height:41px;background:#f2f2f0;box-shadow:inset 0 0 0 1px #f8f7f3"></div>
<div style="left:1235px;top:624px;width:82px;height:41px;background:#f2f2f0;box-shadow:inset 0 0 0 1px #f8f7f3"></div>
<div style="left:1318px;top:624px;width:83px;height:41px;background:#f2f2f0;box-shadow:inset 0 0 0 1px #f8f7f3"></div>
<div style="left:1402px;top:624px;width:145px;height:41px;background:#f2f2f0;box-shadow:inset 0 0 0 1px #f8f7f3"></div>
<div style="left:43px;top:627.5px;width:2px;height:19px;background:#dcc188"></div>
<div style="left:43px;top:644.5px;width:17px;height:2px;background:#dcc188"></div>
<svg style="position:absolute;left:63px;top:630.5px" width="28" height="26" viewBox="0 0 28 26">
<defs><linearGradient id="fg6" x1="0.75" y1="0" x2="0.25" y2="1"><stop offset="0" stop-color="#faf41e"/><stop offset="0.5" stop-color="#efc818"/><stop offset="1" stop-color="#d98f0f"/></linearGradient>
<linearGradient id="ff6" x1="0" y1="0" x2="0" y2="1"><stop offset="0" stop-color="#efc86a"/><stop offset="1" stop-color="#d49c48"/></linearGradient></defs>
<path d="M0.6,7 C0.9,4.4 2.4,1.8 4.3,1.4 L9.2,0.5 L11.7,2.2 L21.3,0.4 L22.5,2.2 L21.6,14.6 L4.8,24.9 L4.0,24.7 Z" fill="#f7f48e"/>
<path d="M21.5,3 L27.4,1.6 L21.4,14.8 Z" fill="url(#ff6)"/>
<path d="M5.4,10.5 L14.2,7.8 L15.8,5.4 L21.6,3.3 L21.4,14.8 L4.8,25 Z" fill="url(#fg6)"/>
<path d="M4.8,24.9 L21.4,14.7" stroke="#c8901c" stroke-width="0.8" fill="none"/>
</svg>
<div class="t c" style="left:-146.50px;top:637.00px;transform:scaleX(1.0740);">6/2023</div>
<div class="t" style="left:215.00px;top:637.00px;transform-origin:0 0">Autorizzazione</div>
<div class="t" style="left:330.00px;top:637.00px;transform-origin:0 0">Azienda ULSS 1 - Dolomiti</div>
<div class="t c" style="left:235.00px;top:637.00px;transform:scaleX(0.9660);">Parziale</div>
<div class="t c" style="left:352.50px;top:637.00px;transform:scaleX(1.0620);">02/10/2023</div>
<div class="t c" style="left:467.50px;top:637.00px;transform:scaleX(1.0620);">02/10/2023</div>
<div class="t c" style="left:553.00px;top:637.00px;transform:scaleX(1.0620);">02/10/2023</div>
<div class="t c" style="left:640.00px;top:637.00px;transform:scaleX(1.0620);">02/10/2023</div>
<div class="t c" style="left:725.50px;top:637.00px;transform:scaleX(1.0620);">02/10/2023</div>
<div class="t c" style="left:809.00px;top:637.00px;transform:scaleX(1.0620);">02/10/2023</div>
<div class="t c" style="left:892.50px;top:637.00px;transform:scaleX(1.0620);">02/10/2023</div>
<div class="t c" style="left:976.00px;top:637.00px;transform:scaleX(1.0620);">02/10/2023</div>
<div class="t c" style="left:1059.50px;top:637.00px;transform:scaleX(1.0620);">02/10/2023</div>
<div class="t c" style="left:1174.50px;top:629.00px;transform:scaleX(0.9350);">PROCEDIMENTO</div>
<div class="t c" style="left:1174.50px;top:645.00px;transform:scaleX(0.9100);">CONCLUSO</div>
<div style="left:28px;top:666px;width:68px;height:40px;background:#f2f2f0;box-shadow:inset 0 0 0 1px #f8f7f3"></div>
<div style="left:97px;top:666px;width:113px;height:40px;background:#f2f2f0;box-shadow:inset 0 0 0 1px #f8f7f3"></div>
<div style="left:211px;top:666px;width:114px;height:40px;background:#f2f2f0;box-shadow:inset 0 0 0 1px #f8f7f3"></div>
<div style="left:326px;top:666px;width:164px;height:40px;background:#f2f2f0;box-shadow:inset 0 0 0 1px #f8f7f3"></div>
<div style="left:491px;top:666px;width:88px;height:40px;background:#f2f2f0;box-shadow:inset 0 0 0 1px #f8f7f3"></div>
<div style="left:580px;top:666px;width:145px;height:40px;background:#f2f2f0;box-shadow:inset 0 0 0 1px #f8f7f3"></div>
<div style="left:726px;top:666px;width:83px;height:40px;background:#f2f2f0;box-shadow:inset 0 0 0 1px #f8f7f3"></div>
<div style="left:810px;top:666px;width:86px;height:40px;background:#f2f2f0;box-shadow:inset 0 0 0 1px #f8f7f3"></div>
<div style="left:897px;top:666px;width:86px;height:40px;background:#f2f2f0;box-shadow:inset 0 0 0 1px #f8f7f3"></div>
<div style="left:984px;top:666px;width:83px;height:40px;background:#f2f2f0;box-shadow:inset 0 0 0 1px #f8f7f3"></div>
<div style="left:1068px;top:666px;width:82px;height:40px;background:#f2f2f0;box-shadow:inset 0 0 0 1px #f8f7f3"></div>
<div style="left:1151px;top:666px;width:83px;height:40px;background:#f2f2f0;box-shadow:inset 0 0 0 1px #f8f7f3"></div>
<div style="left:1235px;top:666px;width:82px;height:40px;background:#f2f2f0;box-shadow:inset 0 0 0 1px #f8f7f3"></div>
<div style="left:1318px;top:666px;width:83px;height:40px;background:#f2f2f0;box-shadow:inset 0 0 0 1px #f8f7f3"></div>
<div style="left:1402px;top:666px;width:145px;height:40px;background:#f2f2f0;box-shadow:inset 0 0 0 1px #f8f7f3"></div>
<div style="left:43px;top:669.0px;width:2px;height:19px;background:#dcc188"></div>
<div style="left:43px;top:686.0px;width:17px;height:2px;background:#dcc188"></div>
<svg style="position:absolute;left:63px;top:672.0px" width="28" height="26" viewBox="0 0 28 26">
<defs><linearGradient id="fg7" x1="0.75" y1="0" x2="0.25" y2="1"><stop offset="0" stop-color="#faf41e"/><stop offset="0.5" stop-color="#efc818"/><stop offset="1" stop-color="#d98f0f"/></linearGradient>
<linearGradient id="ff7" x1="0" y1="0" x2="0" y2="1"><stop offset="0" stop-color="#efc86a"/><stop offset="1" stop-color="#d49c48"/></linearGradient></defs>
<path d="M0.6,7 C0.9,4.4 2.4,1.8 4.3,1.4 L9.2,0.5 L11.7,2.2 L21.3,0.4 L22.5,2.2 L21.6,14.6 L4.8,24.9 L4.0,24.7 Z" fill="#f7f48e"/>
<path d="M21.5,3 L27.4,1.6 L21.4,14.8 Z" fill="url(#ff7)"/>
<path d="M5.4,10.5 L14.2,7.8 L15.8,5.4 L21.6,3.3 L21.4,14.8 L4.8,25 Z" fill="url(#fg7)"/>
<path d="M4.8,24.9 L21.4,14.7" stroke="#c8901c" stroke-width="0.8" fill="none"/>
</svg>
<div class="t c" style="left:-146.50px;top:679.00px;transform:scaleX(1.0740);">9/2023</div>
<div class="t" style="left:215.00px;top:679.00px;transform-origin:0 0">Autorizzazione</div>
<div class="t" style="left:330.00px;top:679.00px;transform:scaleX(0.9930);transform-origin:0 0">Casa di cura Villa Berica</div>
<div class="t c" style="left:235.00px;top:679.00px;transform:scaleX(0.9660);">Complessiva</div>
<div class="t c" style="left:352.50px;top:679.00px;transform:scaleX(1.0620);">24/10/2023</div>
<div class="t c" style="left:467.50px;top:679.00px;transform:scaleX(1.0620);">24/10/2023</div>
<div class="t c" style="left:1059.50px;top:679.00px;transform:scaleX(1.0620);">24/10/2023</div>
<div class="t c" style="left:1174.50px;top:671.00px;transform:scaleX(0.9350);">PROCEDIMENTO</div>
<div class="t c" style="left:1174.50px;top:687.00px;transform:scaleX(0.9100);">CONCLUSO</div>
<div style="left:28px;top:707px;width:68px;height:41px;background:#f2f2f0;box-shadow:inset 0 0 0 1px #f8f7f3"></div>
<div style="left:97px;top:707px;width:113px;height:41px;background:#f2f2f0;box-shadow:inset 0 0 0 1px #f8f7f3"></div>
<div style="left:211px;top:707px;width:114px;height:41px;background:#f2f2f0;box-shadow:inset 0 0 0 1px #f8f7f3"></div>
<div style="left:326px;top:707px;width:164px;height:41px;background:#f2f2f0;box-shadow:inset 0 0 0 1px #f8f7f3"></div>
<div style="left:491px;top:707px;width:88px;height:41px;background:#f2f2f0;box-shadow:inset 0 0 0 1px #f8f7f3"></div>
<div style="left:580px;top:707px;width:145px;height:41px;background:#f2f2f0;box-shadow:inset 0 0 0 1px #f8f7f3"></div>
<div style="left:726px;top:707px;width:83px;height:41px;background:#f2f2f0;box-shadow:inset 0 0 0 1px #f8f7f3"></div>
<div style="left:810px;top:707px;width:86px;height:41px;background:#f2f2f0;box-shadow:inset 0 0 0 1px #f8f7f3"></div>
<div style="left:897px;top:707px;width:86px;height:41px;background:#f2f2f0;box-shadow:inset 0 0 0 1px #f8f7f3"></div>
<div style="left:984px;top:707px;width:83px;height:41px;background:#f2f2f0;box-shadow:inset 0 0 0 1px #f8f7f3"></div>
<div style="left:1068px;top:707px;width:82px;height:41px;background:#f2f2f0;box-shadow:inset 0 0 0 1px #f8f7f3"></div>
<div style="left:1151px;top:707px;width:83px;height:41px;background:#f2f2f0;box-shadow:inset 0 0 0 1px #f8f7f3"></div>
<div style="left:1235px;top:707px;width:82px;height:41px;background:#f2f2f0;box-shadow:inset 0 0 0 1px #f8f7f3"></div>
<div style="left:1318px;top:707px;width:83px;height:41px;background:#f2f2f0;box-shadow:inset 0 0 0 1px #f8f7f3"></div>
<div style="left:1402px;top:707px;width:145px;height:41px;background:#f2f2f0;box-shadow:inset 0 0 0 1px #f8f7f3"></div>
<div style="left:43px;top:710.5px;width:2px;height:19px;background:#dcc188"></div>
<div style="left:43px;top:727.5px;width:17px;height:2px;background:#dcc188"></div>
<svg style="position:absolute;left:63px;top:713.5px" width="28" height="26" viewBox="0 0 28 26">
<defs><linearGradient id="fg8" x1="0.75" y1="0" x2="0.25" y2="1"><stop offset="0" stop-color="#faf41e"/><stop offset="0.5" stop-color="#efc818"/><stop offset="1" stop-color="#d98f0f"/></linearGradient>
<linearGradient id="ff8" x1="0" y1="0" x2="0" y2="1"><stop offset="0" stop-color="#efc86a"/><stop offset="1" stop-color="#d49c48"/></linearGradient></defs>
<path d="M0.6,7 C0.9,4.4 2.4,1.8 4.3,1.4 L9.2,0.5 L11.7,2.2 L21.3,0.4 L22.5,2.2 L21.6,14.6 L4.8,24.9 L4.0,24.7 Z" fill="#f7f48e"/>
<path d="M21.5,3 L27.4,1.6 L21.4,14.8 Z" fill="url(#ff8)"/>
<path d="M5.4,10.5 L14.2,7.8 L15.8,5.4 L21.6,3.3 L21.4,14.8 L4.8,25 Z" fill="url(#fg8)"/>
<path d="M4.8,24.9 L21.4,14.7" stroke="#c8901c" stroke-width="0.8" fill="none"/>
</svg>
<div class="t c" style="left:-146.50px;top:720.00px;transform:scaleX(1.0400);">10/2023</div>
<div class="t" style="left:215.00px;top:720.00px;transform-origin:0 0">Autorizzazione</div>
<div class="t" style="left:330.00px;top:720.00px;transform:scaleX(0.9930);transform-origin:0 0">Casa di cura Villa Berica</div>
<div class="t c" style="left:235.00px;top:720.00px;transform:scaleX(0.9660);">Complessiva</div>
<div class="t c" style="left:352.50px;top:720.00px;transform:scaleX(1.0620);">24/10/2023</div>
<div class="t c" style="left:467.50px;top:720.00px;transform:scaleX(1.0620);">24/10/2023</div>
<div class="t c" style="left:1059.50px;top:720.00px;transform:scaleX(1.0620);">24/10/2023</div>
<div class="t c" style="left:1174.50px;top:712.00px;transform:scaleX(0.9350);">PROCEDIMENTO</div>
<div class="t c" style="left:1174.50px;top:728.00px;transform:scaleX(0.9100);">CONCLUSO</div>
<div style="left:28px;top:749px;width:68px;height:40px;background:#f2f2f0;box-shadow:inset 0 0 0 1px #f8f7f3"></div>
<div style="left:97px;top:749px;width:113px;height:40px;background:#f2f2f0;box-shadow:inset 0 0 0 1px #f8f7f3"></div>
<div style="left:211px;top:749px;width:114px;height:40px;background:#f2f2f0;box-shadow:inset 0 0 0 1px #f8f7f3"></div>
<div style="left:326px;top:749px;width:164px;height:40px;background:#f2f2f0;box-shadow:inset 0 0 0 1px #f8f7f3"></div>
<div style="left:491px;top:749px;width:88px;height:40px;background:#f2f2f0;box-shadow:inset 0 0 0 1px #f8f7f3"></div>
<div style="left:580px;top:749px;width:145px;height:40px;background:#f2f2f0;box-shadow:inset 0 0 0 1px #f8f7f3"></div>
<div style="left:726px;top:749px;width:83px;height:40px;background:#f2f2f0;box-shadow:inset 0 0 0 1px #f8f7f3"></div>
<div style="left:810px;top:749px;width:86px;height:40px;background:#f2f2f0;box-shadow:inset 0 0 0 1px #f8f7f3"></div>
<div style="left:897px;top:749px;width:86px;height:40px;background:#f2f2f0;box-shadow:inset 0 0 0 1px #f8f7f3"></div>
<div style="left:984px;top:749px;width:83px;height:40px;background:#f2f2f0;box-shadow:inset 0 0 0 1px #f8f7f3"></div>
<div style="left:1068px;top:749px;width:82px;height:40px;background:#f2f2f0;box-shadow:inset 0 0 0 1px #f8f7f3"></div>
<div style="left:1151px;top:749px;width:83px;height:40px;background:#f2f2f0;box-shadow:inset 0 0 0 1px #f8f7f3"></div>
<div style="left:1235px;top:749px;width:82px;height:40px;background:#f2f2f0;box-shadow:inset 0 0 0 1px #f8f7f3"></div>
<div style="left:1318px;top:749px;width:83px;height:40px;background:#f2f2f0;box-shadow:inset 0 0 0 1px #f8f7f3"></div>
<div style="left:1402px;top:749px;width:145px;height:40px;background:#f2f2f0;box-shadow:inset 0 0 0 1px #f8f7f3"></div>
<div style="left:43px;top:752.0px;width:2px;height:19px;background:#dcc188"></div>
<div style="left:43px;top:769.0px;width:17px;height:2px;background:#dcc188"></div>
<svg style="position:absolute;left:63px;top:755.0px" width="28" height="26" viewBox="0 0 28 26">
<defs><linearGradient id="fg9" x1="0.75" y1="0" x2="0.25" y2="1"><stop offset="0" stop-color="#faf41e"/><stop offset="0.5" stop-color="#efc818"/><stop offset="1" stop-color="#d98f0f"/></linearGradient>
<linearGradient id="ff9" x1="0" y1="0" x2="0" y2="1"><stop offset="0" stop-color="#efc86a"/><stop offset="1" stop-color="#d49c48"/></linearGradient></defs>
<path d="M0.6,7 C0.9,4.4 2.4,1.8 4.3,1.4 L9.2,0.5 L11.7,2.2 L21.3,0.4 L22.5,2.2 L21.6,14.6 L4.8,24.9 L4.0,24.7 Z" fill="#f7f48e"/>
<path d="M21.5,3 L27.4,1.6 L21.4,14.8 Z" fill="url(#ff9)"/>
<path d="M5.4,10.5 L14.2,7.8 L15.8,5.4 L21.6,3.3 L21.4,14.8 L4.8,25 Z" fill="url(#fg9)"/>
<path d="M4.8,24.9 L21.4,14.7" stroke="#c8901c" stroke-width="0.8" fill="none"/>
</svg>
<div class="t c" style="left:-146.50px;top:762.00px;transform:scaleX(1.0400);">11/2023</div>
<div class="t" style="left:215.00px;top:762.00px;transform:scaleX(1.0110);transform-origin:0 0">Accreditamento</div>
<div class="t" style="left:330.00px;top:762.00px;transform:scaleX(0.9930);transform-origin:0 0">Casa di cura Villa Berica</div>
<div class="t c" style="left:235.00px;top:762.00px;transform:scaleX(0.9660);">Complessiva</div>
<div class="t c" style="left:352.50px;top:762.00px;transform:scaleX(1.0620);">24/10/2023</div>
<div class="t c" style="left:467.50px;top:762.00px;transform:scaleX(1.0620);">24/10/2023</div>
<div class="t c" style="left:1059.50px;top:762.00px;transform:scaleX(1.0620);">24/10/2023</div>
<div class="t c" style="left:1174.50px;top:754.00px;transform:scaleX(0.9350);">PROCEDIMENTO</div>
<div class="t c" style="left:1174.50px;top:770.00px;transform:scaleX(0.9100);">CONCLUSO</div>
<div style="left:28px;top:790px;width:68px;height:41px;background:#f2f2f0;box-shadow:inset 0 0 0 1px #f8f7f3"></div>
<div style="left:97px;top:790px;width:113px;height:41px;background:#f2f2f0;box-shadow:inset 0 0 0 1px #f8f7f3"></div>
<div style="left:211px;top:790px;width:114px;height:41px;background:#f2f2f0;box-shadow:inset 0 0 0 1px #f8f7f3"></div>
<div style="left:326px;top:790px;width:164px;height:41px;background:#f2f2f0;box-shadow:inset 0 0 0 1px #f8f7f3"></div>
<div style="left:491px;top:790px;width:88px;height:41px;background:#f2f2f0;box-shadow:inset 0 0 0 1px #f8f7f3"></div>
<div style="left:580px;top:790px;width:145px;height:41px;background:#f2f2f0;box-shadow:inset 0 0 0 1px #f8f7f3"></div>
<div style="left:726px;top:790px;width:83px;height:41px;background:#f2f2f0;box-shadow:inset 0 0 0 1px #f8f7f3"></div>
<div style="left:810px;top:790px;width:86px;height:41px;background:#f2f2f0;box-shadow:inset 0 0 0 1px #f8f7f3"></div>
<div style="left:897px;top:790px;width:86px;height:41px;background:#f2f2f0;box-shadow:inset 0 0 0 1px #f8f7f3"></div>
<div style="left:984px;top:790px;width:83px;height:41px;background:#f2f2f0;box-shadow:inset 0 0 0 1px #f8f7f3"></div>
<div style="left:1068px;top:790px;width:82px;height:41px;background:#f2f2f0;box-shadow:inset 0 0 0 1px #f8f7f3"></div>
<div style="left:1151px;top:790px;width:83px;height:41px;background:#f2f2f0;box-shadow:inset 0 0 0 1px #f8f7f3"></div>
<div style="left:1235px;top:790px;width:82px;height:41px;background:#f2f2f0;box-shadow:inset 0 0 0 1px #f8f7f3"></div>
<div style="left:1318px;top:790px;width:83px;height:41px;background:#f2f2f0;box-shadow:inset 0 0 0 1px #f8f7f3"></div>
<div style="left:1402px;top:790px;width:145px;height:41px;background:#f2f2f0;box-shadow:inset 0 0 0 1px #f8f7f3"></div>
<div style="left:43px;top:793.5px;width:2px;height:19px;background:#dcc188"></div>
<div style="left:43px;top:810.5px;width:17px;height:2px;background:#dcc188"></div>
<svg style="position:absolute;left:63px;top:796.5px" width="28" height="26" viewBox="0 0 28 26">
<defs><linearGradient id="fg10" x1="0.75" y1="0" x2="0.25" y2="1"><stop offset="0" stop-color="#faf41e"/><stop offset="0.5" stop-color="#efc818"/><stop offset="1" stop-color="#d98f0f"/></linearGradient>
<linearGradient id="ff10" x1="0" y1="0" x2="0" y2="1"><stop offset="0" stop-color="#efc86a"/><stop offset="1" stop-color="#d49c48"/></linearGradient></defs>
<path d="M0.6,7 C0.9,4.4 2.4,1.8 4.3,1.4 L9.2,0.5 L11.7,2.2 L21.3,0.4 L22.5,2.2 L21.6,14.6 L4.8,24.9 L4.0,24.7 Z" fill="#f7f48e"/>
<path d="M21.5,3 L27.4,1.6 L21.4,14.8 Z" fill="url(#ff10)"/>
<path d="M5.4,10.5 L14.2,7.8 L15.8,5.4 L21.6,3.3 L21.4,14.8 L4.8,25 Z" fill="url(#fg10)"/>
<path d="M4.8,24.9 L21.4,14.7" stroke="#c8901c" stroke-width="0.8" fill="none"/>
</svg>
<div class="t c" style="left:-146.50px;top:803.00px;transform:scaleX(1.0400);">12/2023</div>
<div class="t" style="left:215.00px;top:803.00px;transform:scaleX(1.0110);transform-origin:0 0">Accreditamento</div>
<div class="t" style="left:330.00px;top:803.00px;transform:scaleX(0.9930);transform-origin:0 0">Casa di cura Villa Berica</div>
<div class="t c" style="left:235.00px;top:803.00px;transform:scaleX(0.9660);">Complessiva</div>
<div class="t c" style="left:352.50px;top:803.00px;transform:scaleX(1.0620);">24/10/2023</div>
<div class="t c" style="left:467.50px;top:803.00px;transform:scaleX(1.0620);">24/10/2023</div>
<div class="t c" style="left:553.00px;top:803.00px;transform:scaleX(1.0620);">24/10/2023</div>
<div class="t c" style="left:640.00px;top:803.00px;transform:scaleX(1.0620);">24/10/2023</div>
<div class="t c" style="left:892.50px;top:803.00px;transform:scaleX(1.0620);">24/10/2023</div>
<div class="t c" style="left:1059.50px;top:803.00px;transform:scaleX(1.0620);">24/10/2023</div>
<div class="t c" style="left:1174.50px;top:795.00px;transform:scaleX(0.9350);">PROCEDIMENTO</div>
<div class="t c" style="left:1174.50px;top:811.00px;transform:scaleX(0.9100);">CONCLUSO</div>
<div style="left:28px;top:832px;width:68px;height:40px;background:#f2f2f0;box-shadow:inset 0 0 0 1px #f8f7f3"></div>
<div style="left:97px;top:832px;width:113px;height:40px;background:#f2f2f0;box-shadow:inset 0 0 0 1px #f8f7f3"></div>
<div style="left:211px;top:832px;width:114px;height:40px;background:#f2f2f0;box-shadow:inset 0 0 0 1px #f8f7f3"></div>
<div style="left:326px;top:832px;width:164px;height:40px;background:#f2f2f0;box-shadow:inset 0 0 0 1px #f8f7f3"></div>
<div style="left:491px;top:832px;width:88px;height:40px;background:#f2f2f0;box-shadow:inset 0 0 0 1px #f8f7f3"></div>
<div style="left:580px;top:832px;width:145px;height:40px;background:#f2f2f0;box-shadow:inset 0 0 0 1px #f8f7f3"></div>
<div style="left:726px;top:832px;width:83px;height:40px;background:#f2f2f0;box-shadow:inset 0 0 0 1px #f8f7f3"></div>
<div style="left:810px;top:832px;width:86px;height:40px;background:#f2f2f0;box-shadow:inset 0 0 0 1px #f8f7f3"></div>
<div style="left:897px;top:832px;width:86px;height:40px;background:#f2f2f0;box-shadow:inset 0 0 0 1px #f8f7f3"></div>
<div style="left:984px;top:832px;width:83px;height:40px;background:#f2f2f0;box-shadow:inset 0 0 0 1px #f8f7f3"></div>
<div style="left:1068px;top:832px;width:82px;height:40px;background:#f2f2f0;box-shadow:inset 0 0 0 1px #f8f7f3"></div>
<div style="left:1151px;top:832px;width:83px;height:40px;background:#f2f2f0;box-shadow:inset 0 0 0 1px #f8f7f3"></div>
<div style="left:1235px;top:832px;width:82px;height:40px;background:#f2f2f0;box-shadow:inset 0 0 0 1px #f8f7f3"></div>
<div style="left:1318px;top:832px;width:83px;height:40px;background:#f2f2f0;box-shadow:inset 0 0 0 1px #f8f7f3"></div>
<div style="left:1402px;top:832px;width:145px;height:40px;background:#f2f2f0;box-shadow:inset 0 0 0 1px #f8f7f3"></div>
<div style="left:43px;top:835.0px;width:2px;height:19px;background:#dcc188"></div>
<div style="left:43px;top:852.0px;width:17px;height:2px;background:#dcc188"></div>
<svg style="position:absolute;left:63px;top:838.0px" width="28" height="26" viewBox="0 0 28 26">
<defs><linearGradient id="fg11" x1="0.75" y1="0" x2="0.25" y2="1"><stop offset="0" stop-color="#faf41e"/><stop offset="0.5" stop-color="#efc818"/><stop offset="1" stop-color="#d98f0f"/></linearGradient>
<linearGradient id="ff11" x1="0" y1="0" x2="0" y2="1"><stop offset="0" stop-color="#efc86a"/><stop offset="1" stop-color="#d49c48"/></linearGradient></defs>
<path d="M0.6,7 C0.9,4.4 2.4,1.8 4.3,1.4 L9.2,0.5 L11.7,2.2 L21.3,0.4 L22.5,2.2 L21.6,14.6 L4.8,24.9 L4.0,24.7 Z" fill="#f7f48e"/>
<path d="M21.5,3 L27.4,1.6 L21.4,14.8 Z" fill="url(#ff11)"/>
<path d="M5.4,10.5 L14.2,7.8 L15.8,5.4 L21.6,3.3 L21.4,14.8 L4.8,25 Z" fill="url(#fg11)"/>
<path d="M4.8,24.9 L21.4,14.7" stroke="#c8901c" stroke-width="0.8" fill="none"/>
</svg>
<div class="t c" style="left:-146.50px;top:845.00px;transform:scaleX(1.0400);">13/2023</div>
<div class="t" style="left:215.00px;top:845.00px;transform-origin:0 0">Autorizzazione</div>
<div class="t" style="left:330.00px;top:845.00px;transform:scaleX(0.9930);transform-origin:0 0">Casa di cura Villa Berica</div>
<div class="t c" style="left:235.00px;top:845.00px;transform:scaleX(0.9660);">Complessiva</div>
<div class="t c" style="left:352.50px;top:845.00px;transform:scaleX(1.0620);">24/10/2023</div>
<div class="t c" style="left:467.50px;top:845.00px;transform:scaleX(1.0620);">24/10/2023</div>
<div class="t c" style="left:553.00px;top:845.00px;transform:scaleX(1.0620);">24/10/2023</div>
<div class="t c" style="left:640.00px;top:845.00px;transform:scaleX(1.0620);">24/10/2023</div>
<div class="t c" style="left:892.50px;top:845.00px;transform:scaleX(1.0620);">24/10/2023</div>
<div class="t c" style="left:976.00px;top:845.00px;transform:scaleX(1.0620);">24/10/2023</div>
<div class="t c" style="left:1059.50px;top:845.00px;transform:scaleX(1.0620);">24/10/2023</div>
<div class="t c" style="left:1174.50px;top:837.00px;transform:scaleX(0.9350);">PROCEDIMENTO</div>
<div class="t c" style="left:1174.50px;top:853.00px;transform:scaleX(0.9100);">CONCLUSO</div>
<div style="left:28px;top:873px;width:68px;height:41px;background:#f2f2f0;box-shadow:inset 0 0 0 1px #f8f7f3"></div>
<div style="left:97px;top:873px;width:113px;height:41px;background:#f2f2f0;box-shadow:inset 0 0 0 1px #f8f7f3"></div>
<div style="left:211px;top:873px;width:114px;height:41px;background:#f2f2f0;box-shadow:inset 0 0 0 1px #f8f7f3"></div>
<div style="left:326px;top:873px;width:164px;height:41px;background:#f2f2f0;box-shadow:inset 0 0 0 1px #f8f7f3"></div>
<div style="left:491px;top:873px;width:88px;height:41px;background:#f2f2f0;box-shadow:inset 0 0 0 1px #f8f7f3"></div>
<div style="left:580px;top:873px;width:145px;height:41px;background:#f2f2f0;box-shadow:inset 0 0 0 1px #f8f7f3"></div>
<div style="left:726px;top:873px;width:83px;height:41px;background:#f2f2f0;box-shadow:inset 0 0 0 1px #f8f7f3"></div>
<div style="left:810px;top:873px;width:86px;height:41px;background:#f2f2f0;box-shadow:inset 0 0 0 1px #f8f7f3"></div>
<div style="left:897px;top:873px;width:86px;height:41px;background:#f2f2f0;box-shadow:inset 0 0 0 1px #f8f7f3"></div>
<div style="left:984px;top:873px;width:83px;height:41px;background:#f2f2f0;box-shadow:inset 0 0 0 1px #f8f7f3"></div>
<div style="left:1068px;top:873px;width:82px;height:41px;background:#f2f2f0;box-shadow:inset 0 0 0 1px #f8f7f3"></div>
<div style="left:1151px;top:873px;width:83px;height:41px;background:#f2f2f0;box-shadow:inset 0 0 0 1px #f8f7f3"></div>
<div style="left:1235px;top:873px;width:82px;height:41px;background:#f2f2f0;box-shadow:inset 0 0 0 1px #f8f7f3"></div>
<div style="left:1318px;top:873px;width:83px;height:41px;background:#f2f2f0;box-shadow:inset 0 0 0 1px #f8f7f3"></div>
<div style="left:1402px;top:873px;width:145px;height:41px;background:#f2f2f0;box-shadow:inset 0 0 0 1px #f8f7f3"></div>
<div style="left:43px;top:876.5px;width:2px;height:19px;background:#dcc188"></div>
<div style="left:43px;top:893.5px;width:17px;height:2px;background:#dcc188"></div>
<svg style="position:absolute;left:63px;top:879.5px" width="28" height="26" viewBox="0 0 28 26">
<defs><linearGradient id="fg12" x1="0.75" y1="0" x2="0.25" y2="1"><stop offset="0" stop-color="#faf41e"/><stop offset="0.5" stop-color="#efc818"/><stop offset="1" stop-color="#d98f0f"/></linearGradient>
<linearGradient id="ff12" x1="0" y1="0" x2="0" y2="1"><stop offset="0" stop-color="#efc86a"/><stop offset="1" stop-color="#d49c48"/></linearGradient></defs>
<path d="M0.6,7 C0.9,4.4 2.4,1.8 4.3,1.4 L9.2,0.5 L11.7,2.2 L21.3,0.4 L22.5,2.2 L21.6,14.6 L4.8,24.9 L4.0,24.7 Z" fill="#f7f48e"/>
<path d="M21.5,3 L27.4,1.6 L21.4,14.8 Z" fill="url(#ff12)"/>
<path d="M5.4,10.5 L14.2,7.8 L15.8,5.4 L21.6,3.3 L21.4,14.8 L4.8,25 Z" fill="url(#fg12)"/>
<path d="M4.8,24.9 L21.4,14.7" stroke="#c8901c" stroke-width="0.8" fill="none"/>
</svg>
<div class="t c" style="left:-146.50px;top:886.00px;transform:scaleX(1.0400);">14/2023</div>
<div class="t" style="left:215.00px;top:886.00px;transform-origin:0 0">Autorizzazione</div>
<div class="t" style="left:330.00px;top:886.00px;transform:scaleX(0.9930);transform-origin:0 0">Casa di cura Villa Berica</div>
<div class="t c" style="left:235.00px;top:886.00px;transform:scaleX(0.9660);">Complessiva</div>
<div class="t c" style="left:352.50px;top:886.00px;transform:scaleX(1.0620);">25/10/2023</div>
<div class="t c" style="left:467.50px;top:886.00px;transform:scaleX(1.0620);">25/10/2023</div>
<div class="t c" style="left:1059.50px;top:886.00px;transform:scaleX(1.0620);">25/10/2023</div>
<div class="t c" style="left:1174.50px;top:878.00px;transform:scaleX(0.9350);">PROCEDIMENTO</div>
<div class="t c" style="left:1174.50px;top:894.00px;transform:scaleX(0.9100);">CONCLUSO</div>
<div style="left:28px;top:915px;width:68px;height:40px;background:#f2f2f0;box-shadow:inset 0 0 0 1px #f8f7f3"></div>
<div style="left:97px;top:915px;width:113px;height:40px;background:#f2f2f0;box-shadow:inset 0 0 0 1px #f8f7f3"></div>
<div style="left:211px;top:915px;width:114px;height:40px;background:#f2f2f0;box-shadow:inset 0 0 0 1px #f8f7f3"></div>
<div style="left:326px;top:915px;width:164px;height:40px;background:#f2f2f0;box-shadow:inset 0 0 0 1px #f8f7f3"></div>
<div style="left:491px;top:915px;width:88px;height:40px;background:#f2f2f0;box-shadow:inset 0 0 0 1px #f8f7f3"></div>
<div style="left:580px;top:915px;width:145px;height:40px;background:#f2f2f0;box-shadow:inset 0 0 0 1px #f8f7f3"></div>
<div style="left:726px;top:915px;width:83px;height:40px;background:#f2f2f0;box-shadow:inset 0 0 0 1px #f8f7f3"></div>
<div style="left:810px;top:915px;width:86px;height:40px;background:#f2f2f0;box-shadow:inset 0 0 0 1px #f8f7f3"></div>
<div style="left:897px;top:915px;width:86px;height:40px;background:#f2f2f0;box-shadow:inset 0 0 0 1px #f8f7f3"></div>
<div style="left:984px;top:915px;width:83px;height:40px;background:#f2f2f0;box-shadow:inset 0 0 0 1px #f8f7f3"></div>
<div style="left:1068px;top:915px;width:82px;height:40px;background:#f2f2f0;box-shadow:inset 0 0 0 1px #f8f7f3"></div>
<div style="left:1151px;top:915px;width:83px;height:40px;background:#f2f2f0;box-shadow:inset 0 0 0 1px #f8f7f3"></div>
<div style="left:1235px;top:915px;width:82px;height:40px;background:#f2f2f0;box-shadow:inset 0 0 0 1px #f8f7f3"></div>
<div style="left:1318px;top:915px;width:83px;height:40px;background:#f2f2f0;box-shadow:inset 0 0 0 1px #f8f7f3"></div>
<div style="left:1402px;top:915px;width:145px;height:40px;background:#f2f2f0;box-shadow:inset 0 0 0 1px #f8f7f3"></div>
<div style="left:43px;top:918.0px;width:2px;height:19px;background:#dcc188"></div>
<div style="left:43px;top:935.0px;width:17px;height:2px;background:#dcc188"></div>
<svg style="position:absolute;left:63px;top:921.0px" width="28" height="26" viewBox="0 0 28 26">
<defs><linearGradient id="fg13" x1="0.75" y1="0" x2="0.25" y2="1"><stop offset="0" stop-color="#faf41e"/><stop offset="0.5" stop-color="#efc818"/><stop offset="1" stop-color="#d98f0f"/></linearGradient>
<linearGradient id="ff13" x1="0" y1="0" x2="0" y2="1"><stop offset="0" stop-color="#efc86a"/><stop offset="1" stop-color="#d49c48"/></linearGradient></defs>
<path d="M0.6,7 C0.9,4.4 2.4,1.8 4.3,1.4 L9.2,0.5 L11.7,2.2 L21.3,0.4 L22.5,2.2 L21.6,14.6 L4.8,24.9 L4.0,24.7 Z" fill="#f7f48e"/>
<path d="M21.5,3 L27.4,1.6 L21.4,14.8 Z" fill="url(#ff13)"/>
<path d="M5.4,10.5 L14.2,7.8 L15.8,5.4 L21.6,3.3 L21.4,14.8 L4.8,25 Z" fill="url(#fg13)"/>
<path d="M4.8,24.9 L21.4,14.7" stroke="#c8901c" stroke-width="0.8" fill="none"/>
</svg>
<div class="t c" style="left:-146.50px;top:928.00px;transform:scaleX(1.0400);">15/2023</div>
<div class="t" style="left:215.00px;top:928.00px;transform-origin:0 0">Autorizzazione</div>
<div class="t" style="left:330.00px;top:928.00px;transform:scaleX(0.9930);transform-origin:0 0">Casa di cura Villa Berica</div>
<div class="t c" style="left:235.00px;top:928.00px;transform:scaleX(0.9660);">Complessiva</div>
<div class="t c" style="left:352.50px;top:928.00px;transform:scaleX(1.0620);">26/10/2023</div>
<div class="t c" style="left:467.50px;top:928.00px;transform:scaleX(1.0620);">26/10/2023</div>
<div class="t c" style="left:553.00px;top:928.00px;transform:scaleX(1.0620);">26/10/2023</div>
<div class="t c" style="left:640.00px;top:928.00px;transform:scaleX(1.0620);">26/10/2023</div>
<div class="t c" style="left:725.50px;top:928.00px;transform:scaleX(1.0620);">26/10/2023</div>
<div class="t c" style="left:809.00px;top:928.00px;transform:scaleX(1.0620);">26/10/2023</div>
<div class="t c" style="left:892.50px;top:928.00px;transform:scaleX(1.0620);">26/10/2023</div>
<div class="t c" style="left:976.00px;top:928.00px;transform:scaleX(1.0620);">26/10/2023</div>
<div class="t c" style="left:1059.50px;top:928.00px;transform:scaleX(1.0620);">26/10/2023</div>
<div class="t c" style="left:1174.50px;top:920.00px;transform:scaleX(0.9350);">PROCEDIMENTO</div>
<div class="t c" style="left:1174.50px;top:936.00px;transform:scaleX(0.9100);">CONCLUSO</div>
<div style="left:28px;top:956px;width:68px;height:41px;background:#f2f2f0;box-shadow:inset 0 0 0 1px #f8f7f3"></div>
<div style="left:97px;top:956px;width:113px;height:41px;background:#f2f2f0;box-shadow:inset 0 0 0 1px #f8f7f3"></div>
<div style="left:211px;top:956px;width:114px;height:41px;background:#f2f2f0;box-shadow:inset 0 0 0 1px #f8f7f3"></div>
<div style="left:326px;top:956px;width:164px;height:41px;background:#f2f2f0;box-shadow:inset 0 0 0 1px #f8f7f3"></div>
<div style="left:491px;top:956px;width:88px;height:41px;background:#f2f2f0;box-shadow:inset 0 0 0 1px #f8f7f3"></div>
<div style="left:580px;top:956px;width:145px;height:41px;background:#f2f2f0;box-shadow:inset 0 0 0 1px #f8f7f3"></div>
<div style="left:726px;top:956px;width:83px;height:41px;background:#f2f2f0;box-shadow:inset 0 0 0 1px #f8f7f3"></div>
<div style="left:810px;top:956px;width:86px;height:41px;background:#f2f2f0;box-shadow:inset 0 0 0 1px #f8f7f3"></div>
<div style="left:897px;top:956px;width:86px;height:41px;background:#f2f2f0;box-shadow:inset 0 0 0 1px #f8f7f3"></div>
<div style="left:984px;top:956px;width:83px;height:41px;background:#f2f2f0;box-shadow:inset 0 0 0 1px #f8f7f3"></div>
<div style="left:1068px;top:956px;width:82px;height:41px;background:#f2f2f0;box-shadow:inset 0 0 0 1px #f8f7f3"></div>
<div style="left:1151px;top:956px;width:83px;height:41px;background:#f2f2f0;box-shadow:inset 0 0 0 1px #f8f7f3"></div>
<div style="left:1235px;top:956px;width:82px;height:41px;background:#f2f2f0;box-shadow:inset 0 0 0 1px #f8f7f3"></div>
<div style="left:1318px;top:956px;width:83px;height:41px;background:#f2f2f0;box-shadow:inset 0 0 0 1px #f8f7f3"></div>
<div style="left:1402px;top:956px;width:145px;height:41px;background:#f2f2f0;box-shadow:inset 0 0 0 1px #f8f7f3"></div>
<div style="left:43px;top:959.5px;width:2px;height:19px;background:#dcc188"></div>
<div style="left:43px;top:976.5px;width:17px;height:2px;background:#dcc188"></div>
<svg style="position:absolute;left:63px;top:962.5px" width="28" height="26" viewBox="0 0 28 26">
<defs><linearGradient id="fg14" x1="0.75" y1="0" x2="0.25" y2="1"><stop offset="0" stop-color="#faf41e"/><stop offset="0.5" stop-color="#efc818"/><stop offset="1" stop-color="#d98f0f"/></linearGradient>
<linearGradient id="ff14" x1="0" y1="0" x2="0" y2="1"><stop offset="0" stop-color="#efc86a"/><stop offset="1" stop-color="#d49c48"/></linearGradient></defs>
<path d="M0.6,7 C0.9,4.4 2.4,1.8 4.3,1.4 L9.2,0.5 L11.7,2.2 L21.3,0.4 L22.5,2.2 L21.6,14.6 L4.8,24.9 L4.0,24.7 Z" fill="#f7f48e"/>
<path d="M21.5,3 L27.4,1.6 L21.4,14.8 Z" fill="url(#ff14)"/>
<path d="M5.4,10.5 L14.2,7.8 L15.8,5.4 L21.6,3.3 L21.4,14.8 L4.8,25 Z" fill="url(#fg14)"/>
<path d="M4.8,24.9 L21.4,14.7" stroke="#c8901c" stroke-width="0.8" fill="none"/>
</svg>
<div class="t c" style="left:-146.50px;top:969.00px;transform:scaleX(1.0400);">16/2023</div>
<div class="t" style="left:215.00px;top:969.00px;transform-origin:0 0">Autorizzazione</div>
<div class="t" style="left:330.00px;top:969.00px;transform:scaleX(0.9930);transform-origin:0 0">Casa di cura Villa Berica</div>
<div class="t c" style="left:235.00px;top:969.00px;transform:scaleX(0.9660);">Complessiva</div>
<div class="t c" style="left:352.50px;top:969.00px;transform:scaleX(1.0620);">26/10/2023</div>
<div class="t c" style="left:467.50px;top:969.00px;transform:scaleX(1.0620);">26/10/2023</div>
<div class="t c" style="left:1059.50px;top:969.00px;transform:scaleX(1.0620);">26/10/2023</div>
<div class="t c" style="left:1174.50px;top:961.00px;transform:scaleX(0.9350);">PROCEDIMENTO</div>
<div class="t c" style="left:1174.50px;top:977.00px;transform:scaleX(0.9100);">CONCLUSO</div>
<div style="left:28px;top:998px;width:68px;height:55px;background:#f2f2f0;box-shadow:inset 0 0 0 1px #f8f7f3"></div>
<div style="left:97px;top:998px;width:113px;height:55px;background:#f2f2f0;box-shadow:inset 0 0 0 1px #f8f7f3"></div>
<div style="left:211px;top:998px;width:114px;height:55px;background:#f2f2f0;box-shadow:inset 0 0 0 1px #f8f7f3"></div>
<div style="left:326px;top:998px;width:164px;height:55px;background:#f2f2f0;box-shadow:inset 0 0 0 1px #f8f7f3"></div>
<div style="left:491px;top:998px;width:88px;height:55px;background:#f2f2f0;box-shadow:inset 0 0 0 1px #f8f7f3"></div>
<div style="left:580px;top:998px;width:145px;height:55px;background:#f2f2f0;box-shadow:inset 0 0 0 1px #f8f7f3"></div>
<div style="left:726px;top:998px;width:83px;height:55px;background:#f2f2f0;box-shadow:inset 0 0 0 1px #f8f7f3"></div>
<div style="left:810px;top:998px;width:86px;height:55px;background:#f2f2f0;box-shadow:inset 0 0 0 1px #f8f7f3"></div>
<div style="left:897px;top:998px;width:86px;height:55px;background:#f2f2f0;box-shadow:inset 0 0 0 1px #f8f7f3"></div>
<div style="left:984px;top:998px;width:83px;height:55px;background:#f2f2f0;box-shadow:inset 0 0 0 1px #f8f7f3"></div>
<div style="left:1068px;top:998px;width:82px;height:55px;background:#f2f2f0;box-shadow:inset 0 0 0 1px #f8f7f3"></div>
<div style="left:1151px;top:998px;width:83px;height:55px;background:#f2f2f0;box-shadow:inset 0 0 0 1px #f8f7f3"></div>
<div style="left:1235px;top:998px;width:82px;height:55px;background:#f2f2f0;box-shadow:inset 0 0 0 1px #f8f7f3"></div>
<div style="left:1318px;top:998px;width:83px;height:55px;background:#f2f2f0;box-shadow:inset 0 0 0 1px #f8f7f3"></div>
<div style="left:1402px;top:998px;width:145px;height:55px;background:#f2f2f0;box-shadow:inset 0 0 0 1px #f8f7f3"></div>
<div style="left:43px;top:1008.5px;width:2px;height:19px;background:#dcc188"></div>
<div style="left:43px;top:1025.5px;width:17px;height:2px;background:#dcc188"></div>
<svg style="position:absolute;left:63px;top:1011.5px" width="28" height="26" viewBox="0 0 28 26">
<defs><linearGradient id="fg15" x1="0.75" y1="0" x2="0.25" y2="1"><stop offset="0" stop-color="#faf41e"/><stop offset="0.5" stop-color="#efc818"/><stop offset="1" stop-color="#d98f0f"/></linearGradient>
<linearGradient id="ff15" x1="0" y1="0" x2="0" y2="1"><stop offset="0" stop-color="#efc86a"/><stop offset="1" stop-color="#d49c48"/></linearGradient></defs>
<path d="M0.6,7 C0.9,4.4 2.4,1.8 4.3,1.4 L9.2,0.5 L11.7,2.2 L21.3,0.4 L22.5,2.2 L21.6,14.6 L4.8,24.9 L4.0,24.7 Z" fill="#f7f48e"/>
<path d="M21.5,3 L27.4,1.6 L21.4,14.8 Z" fill="url(#ff15)"/>
<path d="M5.4,10.5 L14.2,7.8 L15.8,5.4 L21.6,3.3 L21.4,14.8 L4.8,25 Z" fill="url(#fg15)"/>
<path d="M4.8,24.9 L21.4,14.7" stroke="#c8901c" stroke-width="0.8" fill="none"/>
</svg>
<div class="t c" style="left:-146.50px;top:1018.00px;transform:scaleX(1.0400);">17/2023</div>
<div class="t" style="left:215.00px;top:1018.00px;transform-origin:0 0">Autorizzazione</div>
<div class="t" style="left:330.00px;top:1002.00px;transform:scaleX(0.9400);transform-origin:0 0">AZIENDA OSPEDALIERA</div>
<div class="t" style="left:330.00px;top:1018.00px;transform:scaleX(0.9400);transform-origin:0 0">UNIVERSITARIA</div>
<div class="t" style="left:330.00px;top:1034.00px;transform:scaleX(0.9400);transform-origin:0 0">INTEGRATA VERONA</div>
<div class="t c" style="left:235.00px;top:1018.00px;transform:scaleX(0.9660);">Complessiva</div>
<div class="t c" style="left:352.50px;top:1018.00px;transform:scaleX(1.0620);">30/10/2023</div>
<div class="t c" style="left:467.50px;top:1018.00px;transform:scaleX(1.0620);">30/10/2023</div>
<div class="t c" style="left:1059.50px;top:1018.00px;transform:scaleX(1.0620);">30/10/2023</div>
<div class="t c" style="left:1174.50px;top:1010.00px;transform:scaleX(0.9350);">PROCEDIMENTO</div>
<div class="t c" style="left:1174.50px;top:1026.00px;transform:scaleX(0.9100);">CONCLUSO</div>
<div style="left:28px;top:1054px;width:68px;height:56px;background:#f2f2f0;box-shadow:inset 0 0 0 1px #f8f7f3"></div>
<div style="left:97px;top:1054px;width:113px;height:56px;background:#f2f2f0;box-shadow:inset 0 0 0 1px #f8f7f3"></div>
<div style="left:211px;top:1054px;width:114px;height:56px;background:#f2f2f0;box-shadow:inset 0 0 0 1px #f8f7f3"></div>
<div style="left:326px;top:1054px;width:164px;height:56px;background:#f2f2f0;box-shadow:inset 0 0 0 1px #f8f7f3"></div>
<div style="left:491px;top:1054px;width:88px;height:56px;background:#f2f2f0;box-shadow:inset 0 0 0 1px #f8f7f3"></div>
<div style="left:580px;top:1054px;width:145px;height:56px;background:#f2f2f0;box-shadow:inset 0 0 0 1px #f8f7f3"></div>
<div style="left:726px;top:1054px;width:83px;height:56px;background:#f2f2f0;box-shadow:inset 0 0 0 1px #f8f7f3"></div>
<div style="left:810px;top:1054px;width:86px;height:56px;background:#f2f2f0;box-shadow:inset 0 0 0 1px #f8f7f3"></div>
<div style="left:897px;top:1054px;width:86px;height:56px;background:#f2f2f0;box-shadow:inset 0 0 0 1px #f8f7f3"></div>
<div style="left:984px;top:1054px;width:83px;height:56px;background:#f2f2f0;box-shadow:inset 0 0 0 1px #f8f7f3"></div>
<div style="left:1068px;top:1054px;width:82px;height:56px;background:#f2f2f0;box-shadow:inset 0 0 0 1px #f8f7f3"></div>
<div style="left:1151px;top:1054px;width:83px;height:56px;background:#f2f2f0;box-shadow:inset 0 0 0 1px #f8f7f3"></div>
<div style="left:1235px;top:1054px;width:82px;height:56px;background:#f2f2f0;box-shadow:inset 0 0 0 1px #f8f7f3"></div>
<div style="left:1318px;top:1054px;width:83px;height:56px;background:#f2f2f0;box-shadow:inset 0 0 0 1px #f8f7f3"></div>
<div style="left:1402px;top:1054px;width:145px;height:56px;background:#f2f2f0;box-shadow:inset 0 0 0 1px #f8f7f3"></div>
<div style="left:43px;top:1065.0px;width:2px;height:19px;background:#dcc188"></div>
<div style="left:43px;top:1082.0px;width:17px;height:2px;background:#dcc188"></div>
<svg style="position:absolute;left:63px;top:1068.0px" width="28" height="26" viewBox="0 0 28 26">
<defs><linearGradient id="fg16" x1="0.75" y1="0" x2="0.25" y2="1"><stop offset="0" stop-color="#faf41e"/><stop offset="0.5" stop-color="#efc818"/><stop offset="1" stop-color="#d98f0f"/></linearGradient>
<linearGradient id="ff16" x1="0" y1="0" x2="0" y2="1"><stop offset="0" stop-color="#efc86a"/><stop offset="1" stop-color="#d49c48"/></linearGradient></defs>
<path d="M0.6,7 C0.9,4.4 2.4,1.8 4.3,1.4 L9.2,0.5 L11.7,2.2 L21.3,0.4 L22.5,2.2 L21.6,14.6 L4.8,24.9 L4.0,24.7 Z" fill="#f7f48e"/>
<path d="M21.5,3 L27.4,1.6 L21.4,14.8 Z" fill="url(#ff16)"/>
<path d="M5.4,10.5 L14.2,7.8 L15.8,5.4 L21.6,3.3 L21.4,14.8 L4.8,25 Z" fill="url(#fg16)"/>
<path d="M4.8,24.9 L21.4,14.7" stroke="#c8901c" stroke-width="0.8" fill="none"/>
</svg>
<div class="t c" style="left:-146.50px;top:1075.00px;transform:scaleX(1.0400);">18/2023</div>
<div class="t" style="left:215.00px;top:1075.00px;transform-origin:0 0">Autorizzazione</div>
<div class="t" style="left:330.00px;top:1059.00px;transform:scaleX(0.9400);transform-origin:0 0">AZIENDA OSPEDALIERA</div>
<div class="t" style="left:330.00px;top:1075.00px;transform:scaleX(0.9400);transform-origin:0 0">UNIVERSITARIA</div>
<div class="t" style="left:330.00px;top:1091.00px;transform:scaleX(0.9400);transform-origin:0 0">INTEGRATA VERONA</div>
<div class="t c" style="left:235.00px;top:1075.00px;transform:scaleX(0.9660);">Complessiva</div>
<div class="t c" style="left:352.50px;top:1075.00px;transform:scaleX(1.0620);">30/10/2023</div>
<div class="t c" style="left:467.50px;top:1075.00px;transform:scaleX(1.0620);">30/10/2023</div>
<div class="t c" style="left:1059.50px;top:1075.00px;transform:scaleX(1.0620);">30/10/2023</div>
<div class="t c" style="left:1174.50px;top:1067.00px;transform:scaleX(0.9350);">PROCEDIMENTO</div>
<div class="t c" style="left:1174.50px;top:1083.00px;transform:scaleX(0.9100);">CONCLUSO</div>
<div style="left:28px;top:1111px;width:68px;height:40px;background:#f2f2f0;box-shadow:inset 0 0 0 1px #f8f7f3"></div>
<div style="left:97px;top:1111px;width:113px;height:40px;background:#f2f2f0;box-shadow:inset 0 0 0 1px #f8f7f3"></div>
<div style="left:211px;top:1111px;width:114px;height:40px;background:#f2f2f0;box-shadow:inset 0 0 0 1px #f8f7f3"></div>
<div style="left:326px;top:1111px;width:164px;height:40px;background:#f2f2f0;box-shadow:inset 0 0 0 1px #f8f7f3"></div>
<div style="left:491px;top:1111px;width:88px;height:40px;background:#f2f2f0;box-shadow:inset 0 0 0 1px #f8f7f3"></div>
<div style="left:580px;top:1111px;width:145px;height:40px;background:#f2f2f0;box-shadow:inset 0 0 0 1px #f8f7f3"></div>
<div style="left:726px;top:1111px;width:83px;height:40px;background:#f2f2f0;box-shadow:inset 0 0 0 1px #f8f7f3"></div>
<div style="left:810px;top:1111px;width:86px;height:40px;background:#f2f2f0;box-shadow:inset 0 0 0 1px #f8f7f3"></div>
<div style="left:897px;top:1111px;width:86px;height:40px;background:#f2f2f0;box-shadow:inset 0 0 0 1px #f8f7f3"></div>
<div style="left:984px;top:1111px;width:83px;height:40px;background:#f2f2f0;box-shadow:inset 0 0 0 1px #f8f7f3"></div>
<div style="left:1068px;top:1111px;width:82px;height:40px;background:#f2f2f0;box-shadow:inset 0 0 0 1px #f8f7f3"></div>
<div style="left:1151px;top:1111px;width:83px;height:40px;background:#f2f2f0;box-shadow:inset 0 0 0 1px #f8f7f3"></div>
<div style="left:1235px;top:1111px;width:82px;height:40px;background:#f2f2f0;box-shadow:inset 0 0 0 1px #f8f7f3"></div>
<div style="left:1318px;top:1111px;width:83px;height:40px;background:#f2f2f0;box-shadow:inset 0 0 0 1px #f8f7f3"></div>
<div style="left:1402px;top:1111px;width:145px;height:40px;background:#f2f2f0;box-shadow:inset 0 0 0 1px #f8f7f3"></div>
<div style="left:43px;top:1114.0px;width:2px;height:19px;background:#dcc188"></div>
<div style="left:43px;top:1131.0px;width:17px;height:2px;background:#dcc188"></div>
<svg style="position:absolute;left:63px;top:1117.0px" width="28" height="26" viewBox="0 0 28 26">
<defs><linearGradient id="fg17" x1="0.75" y1="0" x2="0.25" y2="1"><stop offset="0" stop-color="#faf41e"/><stop offset="0.5" stop-color="#efc818"/><stop offset="1" stop-color="#d98f0f"/></linearGradient>
<linearGradient id="ff17" x1="0" y1="0" x2="0" y2="1"><stop offset="0" stop-color="#efc86a"/><stop offset="1" stop-color="#d49c48"/></linearGradient></defs>
<path d="M0.6,7 C0.9,4.4 2.4,1.8 4.3,1.4 L9.2,0.5 L11.7,2.2 L21.3,0.4 L22.5,2.2 L21.6,14.6 L4.8,24.9 L4.0,24.7 Z" fill="#f7f48e"/>
<path d="M21.5,3 L27.4,1.6 L21.4,14.8 Z" fill="url(#ff17)"/>
<path d="M5.4,10.5 L14.2,7.8 L15.8,5.4 L21.6,3.3 L21.4,14.8 L4.8,25 Z" fill="url(#fg17)"/>
<path d="M4.8,24.9 L21.4,14.7" stroke="#c8901c" stroke-width="0.8" fill="none"/>
</svg>
<div class="t c" style="left:-146.50px;top:1124.00px;transform:scaleX(1.0400);">19/2023</div>
<div class="t" style="left:215.00px;top:1124.00px;transform-origin:0 0">Autorizzazione</div>
<div class="t" style="left:330.00px;top:1124.00px;transform:scaleX(0.9930);transform-origin:0 0">Casa di cura Villa Berica</div>
<div class="t c" style="left:235.00px;top:1124.00px;transform:scaleX(0.9660);">Complessiva</div>
<div class="t c" style="left:352.50px;top:1124.00px;transform:scaleX(1.0620);">27/10/2023</div>
<div class="t c" style="left:467.50px;top:1124.00px;transform:scaleX(1.0620);">02/11/2023</div>
<div class="t c" style="left:1059.50px;top:1124.00px;transform:scaleX(1.0620);">02/11/2023</div>
<div class="t c" style="left:1174.50px;top:1116.00px;transform:scaleX(0.9350);">PROCEDIMENTO</div>
<div class="t c" style="left:1174.50px;top:1132.00px;transform:scaleX(0.9100);">CONCLUSO</div>
<div style="left:24px;top:1105px;width:1528px;height:58px;border:6px solid #ee1c25;border-radius:4px"></div>
<div style="left:1434.5px;top:1147.5px;width:79px;height:3px;background:#ee1c25;border-radius:2px"></div>
</body></html>
